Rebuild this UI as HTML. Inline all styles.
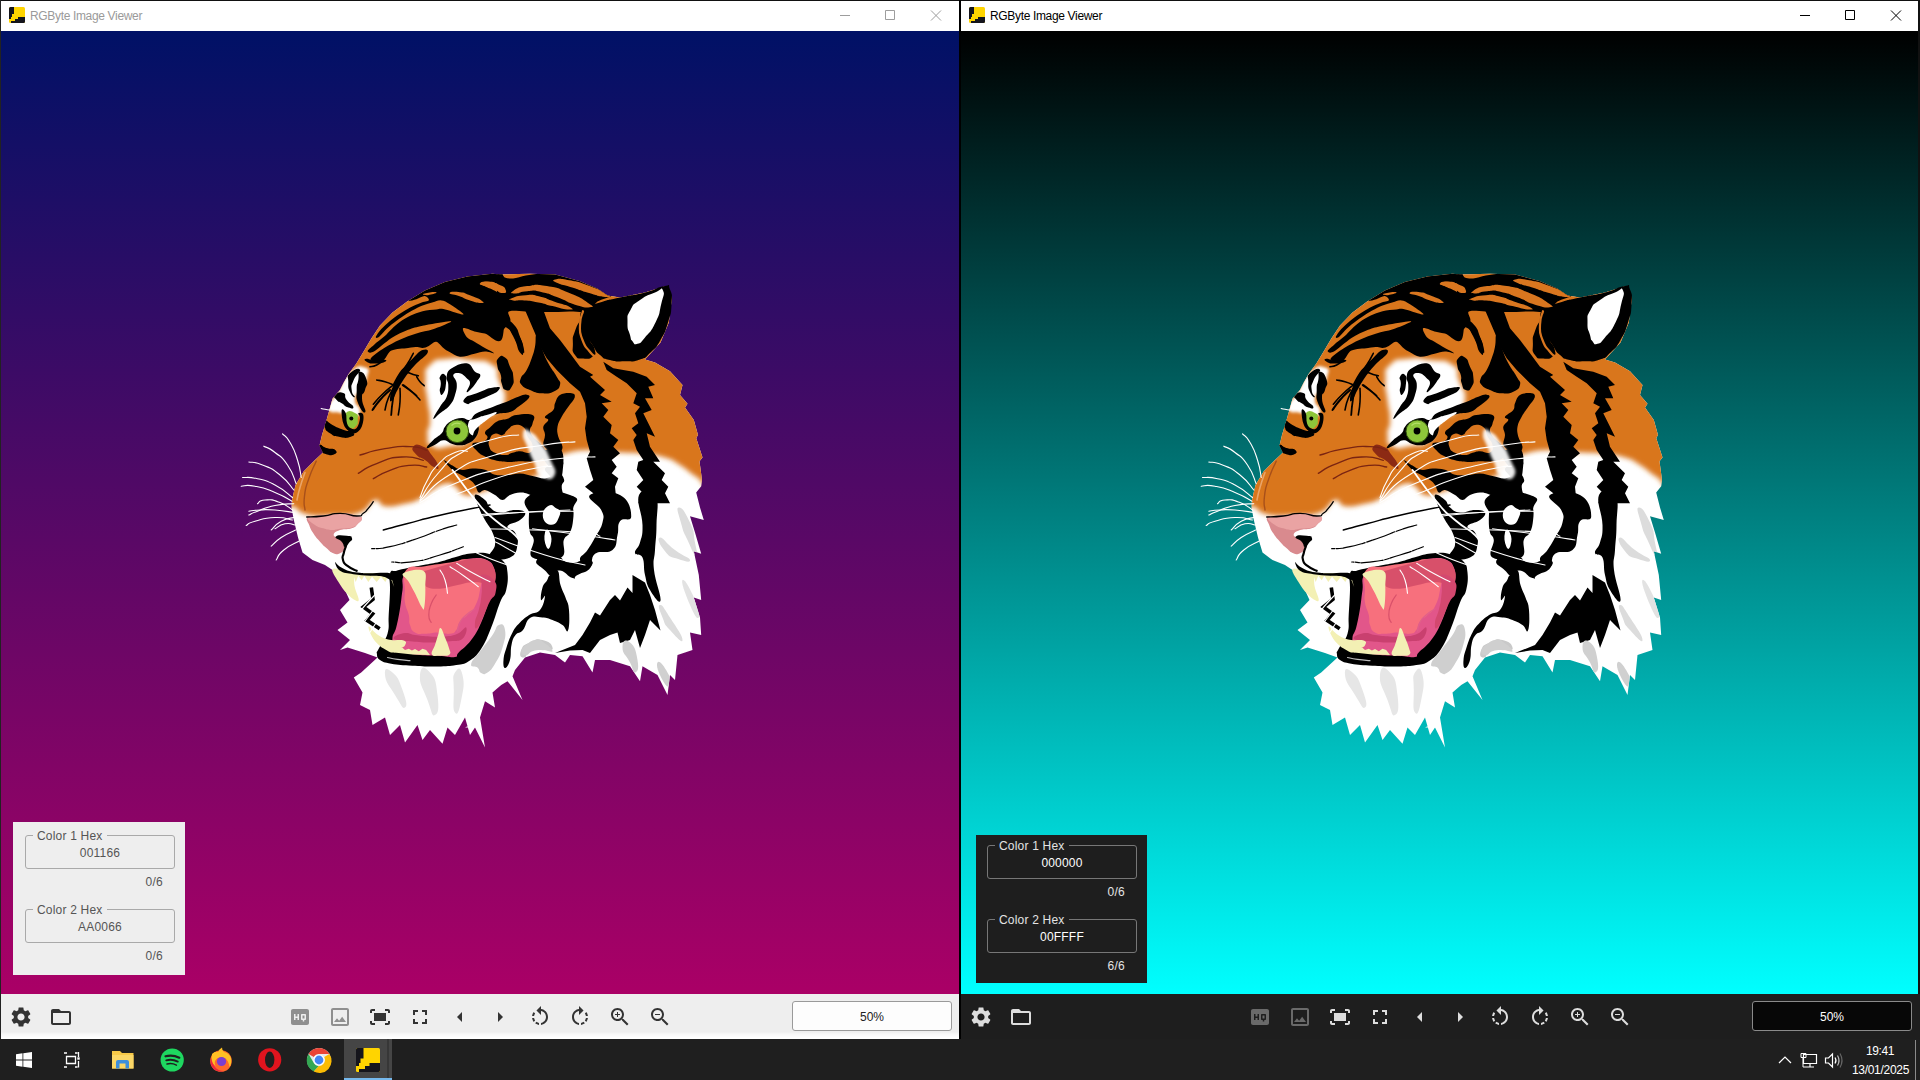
<!DOCTYPE html>
<html><head><meta charset="utf-8">
<style>
*{margin:0;padding:0;box-sizing:border-box}
html,body{width:1920px;height:1080px;overflow:hidden;background:#1f1f1f;font-family:"Liberation Sans",sans-serif}
.abs{position:absolute}
#lw{left:0;top:0;width:960px;height:1039px;background:#fff}
#rw{left:960px;top:0;width:960px;height:1039px;background:#1e1e1e}
.tb{left:0;top:0;width:100%;height:31px;background:#fff;border-top:1px solid #111}
.tb .ttl{position:absolute;left:30px;top:7px;font-size:12px;line-height:16px;letter-spacing:-0.340px}
.cv{left:0;top:31px;width:100%;height:963px}
#lw .cv{background:linear-gradient(#001166,#aa0066)}
#rw .cv{background:linear-gradient(#000000,#00ffff)}
.bar{left:0;top:994px;width:100%;height:45px}
#lw .bar{background:linear-gradient(#eeeeee 0,#eeeeee 38px,#f7f7f7 40px,#ffffff 44px)}
#rw .bar{background:#1e1e1e}
.ic{position:absolute;width:24px;height:24px;top:11px}
.zb{position:absolute;top:7px;width:160px;height:30px;border-radius:3px;font-size:12px;line-height:30px;text-align:center}
#lw .zb{left:792px;background:#fdfdfd;border:1px solid #9a9a9a;color:#222}
#rw .zb{left:792px;background:#070707;border:1px solid #8a8a8a;color:#fff}
.pn{position:absolute;font-size:12px}
.fs{position:absolute;left:12px;width:150px;height:34px;border:1px solid;border-radius:3px}
.fs .lg{position:absolute;left:7px;top:-8px;padding:0 4px;line-height:16px;letter-spacing:.2px}
.fs .vl{position:absolute;left:0;width:100%;top:9px;text-align:center;line-height:16px;letter-spacing:.2px}
.ct{position:absolute;right:22px;line-height:16px;letter-spacing:.3px}
#task{left:0;top:1039px;width:1920px;height:41px;background:#1f1f1f}
</style></head><body>
<svg width="0" height="0" style="position:absolute">
<defs>
<symbol id="i-gear" viewBox="0 0 24 24"><path d="M19.14,12.94c0.04-0.3,0.06-0.61,0.06-0.94c0-0.32-0.02-0.64-0.07-0.94l2.03-1.58c0.18-0.14,0.23-0.41,0.12-0.61 l-1.92-3.32c-0.12-0.22-0.37-0.29-0.59-0.22l-2.39,0.96c-0.5-0.38-1.03-0.7-1.62-0.94L14.4,2.81c-0.04-0.24-0.24-0.41-0.48-0.41 h-3.84c-0.24,0-0.43,0.17-0.47,0.41L9.25,5.35C8.66,5.59,8.12,5.92,7.63,6.29L5.24,5.33c-0.22-0.08-0.47,0-0.59,0.22L2.74,8.87 C2.62,9.08,2.66,9.34,2.86,9.48l2.03,1.58C4.84,11.36,4.8,11.69,4.8,12s0.02,0.64,0.07,0.94l-2.03,1.58 c-0.18,0.14-0.23,0.41-0.12,0.61l1.92,3.32c0.12,0.22,0.37,0.29,0.59,0.22l2.39-0.96c0.5,0.38,1.03,0.7,1.62,0.94l0.36,2.54 c0.05,0.24,0.24,0.41,0.48,0.41h3.84c0.24,0,0.44-0.17,0.47-0.41l0.36-2.54c0.59-0.24,1.13-0.56,1.62-0.94l2.39,0.96 c0.22,0.08,0.47,0,0.59-0.22l1.92-3.32c0.12-0.22,0.07-0.47-0.12-0.61L19.14,12.94z M12,15.6c-1.98,0-3.6-1.62-3.6-3.6 s1.62-3.6,3.6-3.6s3.6,1.62,3.6,3.6S13.980,15.6,12,15.6z"/></symbol>
<symbol id="i-folder" viewBox="0 0 24 24"><path d="M20 6h-8l-2-2H4c-1.1 0-1.990.9-1.990 2L2 18c0 1.1.9 2 2 2h16c1.1 0 2-.9 2-2V8c0-1.1-.9-2-2-2zm0 12H4V8h16v10z"/></symbol>
<symbol id="i-hq" viewBox="0 0 24 24"><path d="M19 4H5c-1.110 0-2 .9-2 2v12c0 1.1.890 2 2 2h14c1.1 0 2-.9 2-2V6c0-1.1-.9-2-2-2zm-8 11H9.500v-2h-2v2H6V9h1.500v2.500h2V9H11v6zm7-1c0 .550-.450 1-1 1h-.750v1.500h-1.500V15H14c-.550 0-1-.450-1-1v-4c0-.550.450-1 1-1h3c.550 0 1 .450 1 1v4zm-3.500-.5h2v-3h-2v3z"/></symbol>
<symbol id="i-img" viewBox="0 0 24 24"><path d="M19 5v14H5V5h14m0-2H5c-1.1 0-2 .9-2 2v14c0 1.1.9 2 2 2h14c1.1 0 2-.9 2-2V5c0-1.1-.9-2-2-2zm-4.860 8.860l-3 3.870L9 13.140 6 17h12l-3.860-5.140z"/></symbol>
<symbol id="i-fit" viewBox="0 0 24 24"><path d="M17 4h3c1.1 0 2 .9 2 2v2h-2V6h-3V4zM4 8V6h3V4H4c-1.1 0-2 .9-2 2v2h2zm16 8v2h-3v2h3c1.1 0 2-.9 2-2v-2h-2zM7 18H4v-2H2v2c0 1.1.9 2 2 2h3v-2zM18 8H6v8h12V8z"/></symbol>
<symbol id="i-full" viewBox="0 0 24 24"><path d="M7 14H5v5h5v-2H7v-3zm-2-4h2V7h3V5H5v5zm12 7h-3v2h5v-5h-2v3zM14 5v2h3v3h2V5h-5z"/></symbol>
<symbol id="i-al" viewBox="0 0 24 24"><path d="M14 7l-5 5 5 5V7z"/></symbol>
<symbol id="i-ar" viewBox="0 0 24 24"><path d="M10 17l5-5-5-5v10z"/></symbol>
<symbol id="i-rl" viewBox="0 0 24 24"><path d="M7.110 8.530L5.700 7.110C4.800 8.270 4.240 9.610 4.070 11h2.020c.14-.870.490-1.720 1.020-2.470zM6.090 13H4.070c.17 1.390.72 2.730 1.620 3.890l1.410-1.420c-.52-.75-.87-1.590-1.010-2.470zm1.010 5.320c1.160.9 2.510 1.440 3.900 1.610V17.900c-.87-.15-1.710-.49-2.460-1.030L7.100 18.320zM13 4.070V1L8.450 5.550 13 10V6.090c2.840.48 5 2.940 5 5.910s-2.160 5.430-5 5.910v2.020c3.950-.49 7-3.850 7-7.930s-3.050-7.440-7-7.930z"/></symbol>
<symbol id="i-rr" viewBox="0 0 24 24"><path d="M15.550 5.550L11 1v3.070C7.060 4.560 4 7.920 4 12s3.050 7.440 7 7.930v-2.020c-2.840-.48-5-2.940-5-5.910s2.160-5.430 5-5.910V10l4.550-4.450zM19.930 11c-.17-1.390-.72-2.730-1.620-3.890l-1.420 1.420c.54.75.88 1.600 1.020 2.470h2.020zM13 17.900v2.020c1.390-.17 2.740-.71 3.900-1.610l-1.440-1.440c-.75.540-1.590.890-2.460 1.030zm3.890-2.420l1.420 1.410c.9-1.160 1.450-2.500 1.620-3.890h-2.020c-.14.870-.48 1.720-1.020 2.480z"/></symbol>
<symbol id="i-zi" viewBox="0 0 24 24"><path d="M15.500 14h-.79l-.28-.27C15.410 12.590 16 11.110 16 9.500 16 5.910 13.090 3 9.500 3S3 5.910 3 9.500 5.910 16 9.500 16c1.610 0 3.090-.59 4.230-1.570l.27.28v.79l5 4.990L20.490 19l-4.990-5zm-6 0C7.010 14 5 11.990 5 9.500S7.010 5 9.500 5 14 7.010 14 9.500 11.990 14 9.500 14zM12 10h-2v2H9v-2H7V9h2V7h1v2h2v1z"/></symbol>
<symbol id="i-zo" viewBox="0 0 24 24"><path d="M15.500 14h-.79l-.28-.27C15.410 12.590 16 11.110 16 9.500 16 5.910 13.090 3 9.500 3S3 5.910 3 9.500 5.910 16 9.500 16c1.610 0 3.090-.59 4.230-1.570l.27.28v.79l5 4.990L20.490 19l-4.990-5zm-6 0C7.010 14 5 11.990 5 9.500S7.010 5 9.500 5 14 7.010 14 9.500 11.990 14 9.500 14zM7 9h5v1H7z"/></symbol>
<symbol id="i-app" viewBox="0 0 16 16"><rect x="0" y="0" width="16" height="16" rx="1.5" fill="#ffd400"/><path d="M0 1.500Q0 0 1.500 0H5V7H3V10H2V12H0Z" fill="#15151c"/><path d="M16 10H9V12H6V14H2V16H14.500Q16 16 16 14.500Z" fill="#15151c"/></symbol>
<!--TIGER--><g id="tiger">
<clipPath id="tsil"><path d="M292.0 500.0L295.5 485.0L303.8 471.2L315.0 460.0L323.0 452.5L319.5 445.5L322.0 435.0L326.2 421.2L329.5 409.5L332.5 398.8L340.0 390.0L343.8 382.5L348.8 373.8L356.2 363.8L363.8 351.2L371.2 338.8L380.0 325.5L392.5 312.5L407.5 301.2L425.0 290.5L445.0 282.0L467.5 276.5L492.5 273.8L500.0 274.5L530.0 273.8L555.0 274.5L580.0 281.2L597.5 288.8L607.5 295.5L620.0 297.5L645.0 292.5L665.0 286.2L672.0 297.5L668.8 322.5L660.5 342.5L645.0 359.5L655.0 362.5L670.0 371.2L682.5 385.0L680.0 395.0L687.5 403.8L685.0 407.5L693.8 420.0L698.0 435.0L696.2 438.0L702.5 457.5L699.5 461.2L702.0 480.0L701.2 486.2L696.2 492.5L700.0 507.5L703.8 520.0L690.0 516.2L695.0 532.5L701.2 553.8L693.8 551.2L698.8 575.0L701.2 600.0L693.8 597.5L700.0 617.5L701.2 635.0L690.0 632.5L692.5 650.0L677.5 655.0L675.0 680.0L670.0 675.0L667.5 695.0L657.5 675.0L642.5 666.2L640.0 681.2L630.0 666.2L610.0 660.0L595.0 660.0L592.5 672.5L582.5 656.2L570.0 655.0L565.0 662.5L555.0 655.0L540.0 652.5L525.0 657.5L515.0 670.0L512.5 676.2L522.5 700.0L507.5 681.2L501.2 685.0L492.5 692.5L495.0 707.5L485.0 701.2L480.0 717.5L485.0 747.5L475.0 727.5L465.0 727.5L480.0 720.0L470.0 735.0L465.0 717.5L455.0 735.0L447.5 727.5L442.5 743.8L430.0 730.0L422.5 740.0L417.5 725.0L405.0 742.5L400.0 725.0L390.0 735.0L385.0 717.5L372.5 725.0L370.0 710.0L360.0 705.0L362.5 692.5L353.8 677.5L361.2 672.5L377.5 657.5L365.0 653.0L347.5 647.5L340.0 650.0L350.0 640.0L337.5 630.0L347.5 622.5L340.0 610.0L349.5 600.0L343.8 587.5L337.5 575.0L332.5 570.0L325.0 565.0L312.5 560.0L302.5 552.5L298.0 537.5L293.8 520.0L291.5 507.5Z"/></clipPath>
<filter id="tb3" x="-20%" y="-20%" width="140%" height="140%"><feGaussianBlur stdDeviation="2.500"/></filter>
<filter id="tb1" x="-20%" y="-20%" width="140%" height="140%"><feGaussianBlur stdDeviation="1.600"/></filter>
<path d="M292.0 500.0L295.5 485.0L303.8 471.2L315.0 460.0L323.0 452.5L319.5 445.5L322.0 435.0L326.2 421.2L329.5 409.5L332.5 398.8L340.0 390.0L343.8 382.5L348.8 373.8L356.2 363.8L363.8 351.2L371.2 338.8L380.0 325.5L392.5 312.5L407.5 301.2L425.0 290.5L445.0 282.0L467.5 276.5L492.5 273.8L500.0 274.5L530.0 273.8L555.0 274.5L580.0 281.2L597.5 288.8L607.5 295.5L620.0 297.5L645.0 292.5L665.0 286.2L672.0 297.5L668.8 322.5L660.5 342.5L645.0 359.5L655.0 362.5L670.0 371.2L682.5 385.0L680.0 395.0L687.5 403.8L685.0 407.5L693.8 420.0L698.0 435.0L696.2 438.0L702.5 457.5L699.5 461.2L702.0 480.0L701.2 486.2L696.2 492.5L700.0 507.5L703.8 520.0L690.0 516.2L695.0 532.5L701.2 553.8L693.8 551.2L698.8 575.0L701.2 600.0L693.8 597.5L700.0 617.5L701.2 635.0L690.0 632.5L692.5 650.0L677.5 655.0L675.0 680.0L670.0 675.0L667.5 695.0L657.5 675.0L642.5 666.2L640.0 681.2L630.0 666.2L610.0 660.0L595.0 660.0L592.5 672.5L582.5 656.2L570.0 655.0L565.0 662.5L555.0 655.0L540.0 652.5L525.0 657.5L515.0 670.0L512.5 676.2L522.5 700.0L507.5 681.2L501.2 685.0L492.5 692.5L495.0 707.5L485.0 701.2L480.0 717.5L485.0 747.5L475.0 727.5L465.0 727.5L480.0 720.0L470.0 735.0L465.0 717.5L455.0 735.0L447.5 727.5L442.5 743.8L430.0 730.0L422.5 740.0L417.5 725.0L405.0 742.5L400.0 725.0L390.0 735.0L385.0 717.5L372.5 725.0L370.0 710.0L360.0 705.0L362.5 692.5L353.8 677.5L361.2 672.5L377.5 657.5L365.0 653.0L347.5 647.5L340.0 650.0L350.0 640.0L337.5 630.0L347.5 622.5L340.0 610.0L349.5 600.0L343.8 587.5L337.5 575.0L332.5 570.0L325.0 565.0L312.5 560.0L302.5 552.5L298.0 537.5L293.8 520.0L291.5 507.5Z" fill="#fff"/>
<g clip-path="url(#tsil)">
<path d="M280.0 510.0C283.2 522.3 284.7 505.1 292.0 506.2C299.3 507.4 296.0 512.2 307.5 514.5C319.0 516.8 321.0 515.5 335.0 515.0C349.0 514.5 349.3 516.5 360.0 512.5C370.7 508.5 368.3 501.7 375.0 500.0C381.7 498.3 377.0 505.2 385.0 506.2C393.0 507.2 395.7 505.8 405.0 503.8C414.3 501.8 412.7 502.4 420.0 498.8C427.3 495.1 425.8 494.0 432.5 490.0C439.2 486.0 439.0 484.8 445.0 483.8C451.0 482.8 449.7 483.2 455.0 486.2C460.3 489.2 458.3 493.3 465.0 495.0C471.7 496.7 470.7 495.2 480.0 492.5C489.3 489.8 490.0 488.3 500.0 485.0C510.0 481.7 508.8 482.0 517.5 480.0C526.2 478.0 523.2 482.8 532.5 477.5C541.8 472.2 543.8 466.3 552.5 460.0C561.2 453.7 555.0 456.4 565.0 453.8C575.0 451.1 575.3 450.3 590.0 450.0C604.7 449.7 606.0 451.5 620.0 452.5C634.0 453.5 630.5 452.4 642.5 453.8C654.5 455.1 655.0 454.5 665.0 457.5C675.0 460.5 671.3 459.7 680.0 465.0C688.7 470.3 686.8 470.8 697.5 477.5C708.2 484.2 711.3 521.3 720.0 490.0C728.7 458.7 747.3 421.3 730.0 360.0C712.7 298.7 735.0 286.7 655.0 260.0C575.0 233.3 523.3 240.0 430.0 260.0C336.7 280.0 345.0 281.7 305.0 335.0C265.0 388.3 286.7 413.3 280.0 460.0C273.3 506.7 276.8 497.7 280.0 510.0Z" fill="#d9761f" filter="url(#tb3)"/>
<path d="M430.0 365.0C437.3 357.9 434.2 360.4 447.5 358.8C460.8 357.1 455.0 357.9 470.0 360.0C485.0 362.1 482.9 358.3 492.5 365.0C502.1 371.7 494.6 368.3 498.8 380.0C502.9 391.7 506.2 389.2 505.0 400.0C503.8 410.8 503.3 405.8 495.0 412.5C486.7 419.2 488.3 410.8 480.0 420.0C471.7 429.2 480.0 431.2 470.0 440.0C460.0 448.8 462.5 444.2 450.0 446.2C437.5 448.3 440.0 450.0 432.5 446.2C425.0 442.5 428.3 443.8 427.5 435.0C426.7 426.2 430.0 431.7 430.0 420.0C430.0 408.3 429.0 413.3 427.5 400.0C426.0 386.7 424.7 391.7 425.5 380.0C426.3 368.3 422.7 372.1 430.0 365.0Z" fill="#fff" filter="url(#tb3)"/>
<path d="M328.8 405.0C331.2 398.8 330.4 403.3 337.5 392.5C344.6 381.7 340.8 380.8 350.0 372.5C359.2 364.2 359.3 365.8 365.0 367.5C370.7 369.2 368.7 370.0 367.0 377.5C365.3 385.0 364.0 382.5 360.0 390.0C356.0 397.5 355.0 393.3 355.0 400.0C355.0 406.7 360.0 404.6 360.0 410.0C360.0 415.4 361.7 415.2 355.0 416.2C348.3 417.2 348.3 414.7 340.0 413.0C331.7 411.3 333.8 413.9 330.0 411.2C326.2 408.6 326.2 411.2 328.8 405.0Z" fill="#fff" filter="url(#tb1)"/>
</g>
<path d="M580.0 317.5C580.8 309.2 580.8 312.5 587.5 307.5C594.2 302.5 589.2 305.8 600.0 302.5C610.8 299.2 605.0 300.8 620.0 297.5C635.0 294.2 630.4 296.2 645.0 292.5C659.6 288.8 655.4 287.2 663.8 286.2C672.1 285.2 667.4 283.2 670.0 289.5C672.6 295.8 672.2 294.0 671.5 305.0C670.8 316.0 671.7 310.8 668.0 322.5C664.3 334.2 666.3 330.0 660.5 340.0C654.7 350.0 657.3 346.0 650.5 352.5C643.7 359.0 648.5 356.6 640.0 359.5C631.5 362.4 635.0 361.1 625.0 361.2C615.0 361.4 618.3 362.1 610.0 360.0C601.7 357.9 605.8 360.0 600.0 355.0C594.2 350.0 597.5 352.5 592.5 345.0C587.5 337.5 589.2 341.7 585.0 332.5C580.8 323.3 579.2 325.8 580.0 317.5Z" fill="#000"/>
<path d="M630.0 335.0C628.3 328.8 627.3 330.8 627.5 322.5C627.7 314.2 626.3 317.5 630.5 310.0C634.7 302.5 631.8 305.8 640.0 300.0C648.2 294.2 647.3 295.7 655.0 292.5C662.7 289.3 661.0 286.3 663.0 290.5C665.0 294.7 663.5 294.3 661.0 305.0C658.5 315.7 660.8 311.7 655.5 322.5C650.2 333.3 651.0 330.4 645.0 337.5C639.0 344.6 641.7 342.5 637.5 343.8C633.3 345.0 635.0 344.2 632.5 341.2C630.0 338.3 631.7 341.2 630.0 335.0Z" fill="#fff"/>
<g clip-path="url(#tsil)">
<path d="M408.1 300.8C408.1 300.1 414.0 297.0 416.4 295.1C418.8 293.2 419.8 291.2 422.6 289.4C425.4 287.6 429.5 285.6 433.0 284.2C436.4 282.8 439.9 282.1 443.4 281.1C446.8 280.0 450.3 278.8 453.7 278.0C457.2 277.1 460.7 276.5 464.1 275.9C467.6 275.3 471.0 274.7 474.5 274.3C477.9 274.0 480.2 274.0 484.9 273.8C489.5 273.6 499.6 262.7 502.5 273.3C505.4 283.9 505.4 327.6 502.5 337.6C499.6 347.6 489.5 334.5 484.9 333.5C480.2 332.4 478.1 332.3 474.5 331.4C470.9 330.5 464.3 327.2 463.1 328.3C461.9 329.3 465.3 335.4 467.2 337.6C469.1 339.9 471.5 340.0 474.5 341.8C477.4 343.5 481.6 346.1 484.9 348.0C488.1 349.9 494.2 352.6 494.2 353.2C494.2 353.8 488.1 351.5 484.9 351.6C481.6 351.7 478.6 352.8 474.5 353.7C470.3 354.6 464.1 357.1 460.0 356.8C455.8 356.5 452.4 353.6 449.6 352.1C446.8 350.7 445.6 349.7 443.4 348.0C441.1 346.3 438.5 342.1 436.1 341.8C433.7 341.4 431.1 344.9 428.8 345.9C426.6 347.0 424.5 347.8 422.6 348.0C420.7 348.2 419.8 347.0 417.4 347.0C415.0 347.0 412.4 347.4 408.1 348.0C403.8 348.6 395.5 348.7 391.5 350.6C387.5 352.5 386.8 357.6 384.2 359.4C381.6 361.2 378.2 361.6 375.9 361.5C373.7 361.3 369.4 360.6 370.7 358.4C372.1 356.1 379.4 351.1 384.2 348.0C389.1 344.9 394.4 342.1 399.8 339.7C405.2 337.3 410.9 335.2 416.4 333.5C421.9 331.7 427.5 331.1 433.0 329.3C438.5 327.5 447.2 323.9 449.6 322.6C452.0 321.3 452.0 321.0 447.5 321.5C443.0 322.1 429.2 324.3 422.6 325.7C416.0 327.1 413.3 327.8 408.1 329.8C402.9 331.9 397.2 334.5 391.5 338.1C385.8 341.8 377.8 349.5 373.9 351.6C369.9 353.8 367.6 352.2 367.6 351.1C367.6 350.0 371.1 347.3 373.9 344.9C376.6 342.5 381.3 339.2 384.2 336.6C387.2 334.0 388.9 331.7 391.5 329.3C394.1 326.9 396.7 324.3 399.8 322.1C402.9 319.8 406.4 317.6 410.2 315.8C414.0 314.0 418.3 312.2 422.6 311.2C426.9 310.1 432.6 310.0 436.1 309.6C439.6 309.3 439.2 308.3 443.4 309.1C447.5 309.9 458.0 313.8 461.0 314.3C464.0 314.8 464.5 314.4 461.5 312.2C458.6 310.0 448.1 302.4 443.4 300.8C438.6 299.1 436.4 301.6 433.0 302.3C429.5 303.1 426.1 304.1 422.6 305.5C419.2 306.8 415.7 308.7 412.2 310.6C408.8 312.5 405.3 314.5 401.9 316.9C398.4 319.2 394.6 322.1 391.5 324.6C388.4 327.2 385.4 330.3 383.2 332.4C380.9 334.6 379.2 336.9 378.0 337.6C376.8 338.3 375.4 338.0 375.9 336.6C376.5 335.2 378.9 331.8 381.1 329.3C383.4 326.8 386.3 324.1 389.4 321.5C392.5 318.9 396.3 316.1 399.8 313.8C403.3 311.4 406.7 309.3 410.2 307.5C413.6 305.7 417.4 304.1 420.5 302.9C423.7 301.7 428.1 301.4 428.8 300.3C429.5 299.1 426.8 296.3 424.7 296.1C422.6 295.9 419.2 298.5 416.4 299.2C413.6 300.0 408.1 301.5 408.1 300.8Z" fill="#000"/>
<path d="M424.7 293.5C428.1 292.6 434.0 291.8 436.1 292.2C438.2 292.5 434.4 293.6 430.9 294.6C427.5 295.5 427.8 295.4 425.7 295.1C423.7 294.7 421.2 294.5 424.7 293.5Z" fill="#d9761f"/>
<path d="M449.6 293.0C449.9 291.7 453.4 291.5 460.0 292.2C466.5 292.9 462.0 292.2 469.3 295.1C476.6 298.0 478.3 298.2 481.7 300.8C485.2 303.4 483.8 303.0 479.7 302.9C475.5 302.7 476.2 302.5 469.3 300.3C462.4 298.0 465.5 298.5 458.9 296.1C452.4 293.7 449.2 294.3 449.6 293.0Z" fill="#d9761f"/>
<path d="M480.7 283.7C482.1 282.3 482.1 281.4 489.0 282.1C495.9 282.8 495.9 283.2 501.5 285.7C507.0 288.3 505.6 287.3 505.6 289.9C505.6 292.5 505.6 293.5 501.5 293.5C497.3 293.5 498.7 292.3 493.2 289.9C487.6 287.5 489.0 288.3 484.9 286.3C480.7 284.2 479.3 285.1 480.7 283.7Z" fill="#d9761f"/>
<path d="M497.7 272.7C498.8 262.7 502.1 276.4 504.7 277.4C507.3 278.3 509.6 278.7 513.1 278.4C516.6 278.1 521.3 276.4 525.8 275.5C530.2 274.7 535.2 273.8 539.8 273.4C544.5 273.1 549.0 273.0 553.9 273.4C558.8 273.9 564.0 275.0 569.4 276.2C574.8 277.5 581.1 279.3 586.2 281.2C591.4 283.0 596.1 285.2 600.3 287.5C604.5 289.8 612.0 292.9 611.6 295.2C611.1 297.6 601.5 298.9 597.5 301.6C593.5 304.3 592.3 309.8 587.7 311.4C583.0 313.0 576.2 311.3 569.4 311.4C562.6 311.5 554.1 312.1 546.9 312.1C539.6 312.1 532.1 311.5 525.8 311.4C519.5 311.3 511.5 309.8 508.9 311.4C506.3 313.0 511.5 318.0 510.3 321.2C509.1 324.5 504.0 328.4 501.9 331.1C499.8 333.8 498.4 347.3 497.7 337.6C497.0 327.8 496.5 282.8 497.7 272.7Z" fill="#000"/>
<path d="M480.1 283.3C481.2 281.8 482.2 281.1 488.5 281.6C494.8 282.1 493.4 282.2 499.1 284.7C504.7 287.2 504.2 286.4 505.4 289.2C506.6 292.0 506.6 293.2 502.6 293.1C498.6 293.0 499.3 291.2 493.4 288.9C487.6 286.6 489.5 288.0 485.0 286.1C480.5 284.2 478.9 284.8 480.1 283.3Z" fill="#d9761f"/>
<path d="M555.3 279.5C559.1 278.5 558.1 278.1 569.4 280.2C580.6 282.3 576.2 280.9 589.1 285.8C602.0 290.7 603.4 291.2 608.0 294.8C612.7 298.5 609.5 297.3 603.1 296.8C596.8 296.2 599.4 296.2 589.1 293.1C578.8 290.0 582.5 290.8 572.2 287.5C561.9 284.2 563.8 286.0 558.1 283.3C552.5 280.6 551.6 280.5 555.3 279.5Z" fill="#d9761f"/>
<path d="M513.1 291.0C516.9 288.6 515.9 287.7 527.2 286.1C538.4 284.5 532.8 283.8 546.9 286.1C560.9 288.4 555.8 287.6 569.4 293.1C583.0 298.7 580.9 298.0 587.7 302.7C594.5 307.4 594.0 306.5 589.8 307.2C585.5 307.8 585.5 307.8 575.0 304.7C564.5 301.5 569.4 301.8 558.1 297.6C546.9 293.4 551.6 294.2 541.2 292.0C530.9 289.8 535.6 290.7 527.2 291.2C518.8 291.6 520.6 293.5 515.9 293.4C511.2 293.4 509.4 293.5 513.1 291.0Z" fill="#d9761f"/>
<path d="M511.7 298.2C515.9 296.5 516.4 295.8 525.8 295.2C535.2 294.7 530.5 294.5 539.8 296.6C549.2 298.8 543.8 298.0 553.9 301.6C564.0 305.1 565.6 304.6 570.1 307.2C574.5 309.8 573.1 309.8 567.3 309.4C561.4 309.1 562.1 308.4 552.5 306.1C542.9 303.7 547.8 304.3 538.4 302.4C529.1 300.5 532.8 301.1 524.4 300.4C515.9 299.8 517.3 301.2 513.1 300.4C508.9 299.7 507.5 299.9 511.7 298.2Z" fill="#d9761f"/>
<path d="M506.1 321.2C508.4 321.2 507.5 320.8 511.7 325.5C515.9 330.2 514.8 327.8 518.8 335.3C522.7 342.8 522.5 342.3 523.7 348.0C524.8 353.6 524.4 353.6 522.3 352.2C520.2 350.8 520.9 350.3 517.3 343.8C513.8 337.2 515.9 338.6 511.7 332.5C507.5 326.4 506.6 329.2 504.7 325.5C502.8 321.7 503.8 321.2 506.1 321.2Z" fill="#000"/>
<path d="M575.0 331.1C578.0 322.7 577.3 325.0 582.0 318.4C586.7 311.9 587.2 309.5 589.1 311.4C590.9 313.3 587.7 315.2 587.7 324.1C587.7 333.0 586.7 329.7 589.1 338.1C591.4 346.6 593.5 343.3 594.7 349.4C595.9 355.5 596.3 353.4 592.6 356.4C588.8 359.5 589.3 359.0 583.4 358.5C577.6 358.0 578.5 359.9 575.0 355.0C571.5 350.1 572.9 351.7 572.9 343.8C572.9 335.8 572.0 339.5 575.0 331.1Z" fill="#000"/>
<path d="M525.0 310.0L535.0 333.3L540.0 346.7L546.7 358.3L556.7 370.0L570.0 383.3L580.0 391.7L585.0 403.3L586.7 416.7L585.0 428.3L586.7 440.0L590.0 451.7L586.7 458.3L590.0 470.0L593.3 480.0L585.0 486.7L593.3 493.3L596.7 503.3L616.7 503.3L615.0 486.7L618.3 478.3L611.7 473.3L616.7 466.7L611.7 460.0L620.0 453.3L613.3 446.7L618.3 440.0L610.0 433.3L611.7 425.0L603.3 416.7L608.3 410.0L601.7 403.3L611.7 401.7L600.0 395.0L605.0 390.0L590.0 376.7L593.3 375.0L580.0 366.7L570.0 353.3L560.0 340.0L550.0 328.3L543.3 310.0Z" fill="#000"/>
<path d="M507.5 321.7C508.9 320.0 510.0 320.0 514.2 325.0C518.3 330.0 516.9 328.1 520.0 336.7C523.1 345.3 523.3 345.6 523.3 350.8C523.3 356.1 522.8 356.1 520.0 352.5C517.2 348.9 518.3 347.5 515.0 340.0C511.7 332.5 512.5 336.1 510.0 330.0C507.5 323.9 506.1 323.3 507.5 321.7Z" fill="#000"/>
<path d="M536.7 335.0C538.4 335.4 538.6 340.8 541.7 348.3C544.8 355.9 544.3 355.8 548.3 363.3C552.3 370.9 553.6 370.9 556.7 376.7C559.8 382.4 560.9 381.0 560.0 385.0C559.1 389.0 558.2 389.4 553.3 391.7C548.4 393.9 547.9 393.8 541.7 393.3C535.4 392.9 535.3 392.2 530.0 390.0C524.7 387.8 524.1 388.1 521.7 385.0C519.2 381.9 519.5 382.3 520.8 378.3C522.2 374.3 523.8 375.3 526.7 370.0C529.6 364.7 529.4 364.6 531.7 358.3C533.9 352.1 533.7 352.9 535.0 346.7C536.3 340.4 534.9 334.6 536.7 335.0Z" fill="#000"/>
<path d="M498.3 358.3C500.8 355.3 501.1 354.7 505.0 357.5C508.9 360.3 507.2 360.3 510.0 366.7C512.8 373.1 512.8 370.0 513.3 376.7C513.9 383.3 514.2 382.2 511.7 386.7C509.2 391.1 509.2 391.1 505.8 390.0C502.5 388.9 503.3 388.3 501.7 383.3C500.0 378.3 502.2 380.6 500.8 375.0C499.4 369.4 498.3 372.2 497.5 366.7C496.7 361.1 495.8 361.4 498.3 358.3Z" fill="#000"/>
<path d="M560.0 395.0C563.3 393.0 568.7 392.8 571.7 393.3C574.6 393.8 575.3 394.8 574.7 397.5C574.0 400.2 570.9 402.8 568.3 406.7C565.7 410.5 563.8 412.7 561.7 416.7C559.5 420.7 558.2 422.7 557.5 426.7C556.8 430.7 557.3 432.7 558.3 436.7C559.3 440.7 562.2 443.0 562.5 446.7C562.8 450.3 559.8 451.7 560.0 455.0C560.2 458.3 563.3 460.3 563.3 463.3C563.3 466.3 559.8 466.7 560.0 470.0C560.2 473.3 563.8 476.7 564.2 480.0C564.5 483.3 561.8 482.0 561.7 486.7C561.5 491.3 566.0 500.0 563.3 503.3C560.7 506.7 550.7 506.7 548.3 503.3C546.0 500.0 550.7 491.3 551.7 486.7C552.7 482.0 554.7 483.3 553.3 480.0C552.0 476.7 546.0 473.0 545.0 470.0C544.0 467.0 548.7 467.3 548.3 465.0C548.0 462.7 543.3 461.0 543.3 458.3C543.3 455.7 548.3 454.3 548.3 451.7C548.3 449.0 544.0 448.3 543.3 445.0C542.7 441.7 545.0 438.7 545.0 435.0C545.0 431.3 542.7 429.7 543.3 426.7C544.0 423.7 548.0 422.0 548.3 420.0C548.7 418.0 544.0 418.7 545.0 416.7C546.0 414.7 551.3 412.7 553.3 410.0C555.3 407.3 553.7 406.3 555.0 403.3C556.3 400.3 556.7 397.0 560.0 395.0Z" fill="#000"/>
<path d="M603.3 361.7L613.3 368.3L623.3 370.0L633.3 371.7L646.7 376.7L655.0 385.0L648.3 386.7L653.3 398.3L645.0 398.3L651.7 410.0L643.3 413.3L648.3 423.3L655.0 436.7L646.7 433.3L650.0 446.7L660.0 461.7L653.3 461.7L665.0 473.3L661.7 480.0L668.3 486.7L665.0 493.3L670.0 503.3L638.3 503.3L641.7 491.7L636.7 486.7L643.3 480.0L636.7 470.0L638.3 461.7L643.3 460.0L636.7 450.0L633.3 440.0L636.7 435.0L631.7 428.3L638.3 423.3L635.0 413.3L640.0 406.7L633.3 403.3L636.7 393.3L626.7 383.3L616.7 376.7L606.7 370.0Z" fill="#000"/>
</g>
<g clip-path="url(#tsil)">
<path d="M530.0 495.0C542.7 486.7 555.7 490.0 570.0 495.0C584.3 500.0 573.0 500.8 573.0 510.0C573.0 519.2 573.3 515.0 570.0 522.5C566.7 530.0 566.3 525.0 563.0 532.5C559.7 540.0 562.7 538.2 560.0 545.0C557.3 551.8 560.0 551.2 555.0 553.0C550.0 554.8 550.0 554.0 545.0 550.5C540.0 547.0 543.3 548.5 540.0 542.5C536.7 536.5 537.7 540.0 535.0 532.5C532.3 525.0 533.7 532.5 532.0 520.0C530.3 507.5 517.3 503.3 530.0 495.0Z" fill="#000"/>
<path d="M550.0 506.2C551.7 506.5 553.5 508.8 555.0 510.0C556.5 511.2 558.5 512.3 558.8 513.8C559.0 515.2 557.3 517.2 556.2 518.8C555.2 520.3 554.2 522.4 552.5 523.0C550.8 523.6 547.9 523.4 546.2 522.5C544.6 521.6 543.2 519.2 542.5 517.5C541.8 515.8 541.6 513.5 542.0 512.0C542.4 510.5 543.7 509.7 545.0 508.8C546.3 507.8 548.3 506.0 550.0 506.2Z" fill="#fff"/>
<path d="M537.0 559.5C540.3 554.7 544.0 555.0 555.0 556.0C566.0 557.0 559.2 561.3 570.0 562.5C580.8 563.7 580.7 557.8 587.5 559.5C594.3 561.2 593.8 562.3 590.5 567.5C587.2 572.7 583.5 571.5 577.5 575.0C571.5 578.5 578.3 579.5 572.5 578.0C566.7 576.5 566.7 571.5 560.0 570.5C553.3 569.5 557.5 575.0 552.5 575.0C547.5 575.0 550.2 575.7 545.0 570.5C539.8 565.3 533.7 564.3 537.0 559.5Z" fill="#000"/>
<path d="M550.0 575.0C552.5 572.7 555.0 568.2 557.5 570.5C560.0 572.8 558.6 578.7 560.5 585.0C562.4 591.3 563.5 591.7 565.5 597.5C567.5 603.3 568.4 602.3 569.0 610.0C569.6 617.7 569.5 627.0 568.0 630.5C566.5 634.0 566.1 627.5 562.5 625.0C558.9 622.5 557.2 621.8 552.5 620.0C547.8 618.2 547.8 618.0 542.5 617.5C537.2 617.0 534.5 615.1 530.0 618.0C525.5 620.9 526.4 626.0 523.0 630.0C519.6 634.0 518.2 631.5 515.5 635.0C512.8 638.5 512.8 639.2 511.5 645.0C510.2 650.8 511.5 654.6 510.0 660.0C508.5 665.4 506.5 668.0 505.0 668.0C503.5 668.0 503.1 664.8 503.5 660.0C503.9 655.2 504.4 653.9 506.5 647.5C508.6 641.1 509.4 638.3 512.5 632.5C515.6 626.7 515.9 626.7 520.0 622.5C524.1 618.3 525.3 617.4 530.0 614.5C534.7 611.6 536.5 614.3 540.0 610.0C543.5 605.7 544.8 598.6 545.0 596.2C545.2 593.9 541.6 602.0 541.0 600.0C540.4 598.0 541.1 592.0 542.5 587.5C543.9 583.0 545.2 583.4 547.0 580.5C548.8 577.6 547.5 577.3 550.0 575.0Z" fill="#000"/>
<path d="M590.0 495.0C594.4 491.5 610.4 490.0 620.0 495.0C629.6 500.0 631.2 510.1 631.2 516.2C631.2 522.4 623.2 516.9 620.0 521.2C616.8 525.6 619.2 528.3 617.5 535.0C615.8 541.7 617.8 545.6 612.5 550.0C607.2 554.4 600.2 549.7 595.0 553.8C589.8 557.8 593.5 566.0 590.0 567.5C586.5 569.0 580.6 564.1 580.0 560.0C579.4 555.9 584.0 555.2 587.5 550.0C591.0 544.8 591.5 543.9 595.0 537.5C598.5 531.1 601.0 528.9 602.5 522.5C604.0 516.1 604.2 516.4 601.2 510.0C598.3 503.6 585.6 498.5 590.0 495.0Z" fill="#000"/>
<path d="M639.0 495.0C642.0 488.0 651.4 488.0 655.5 495.0C659.6 502.0 656.6 512.2 656.5 525.0C656.4 537.8 655.6 539.5 655.0 550.0C654.4 560.5 652.7 558.2 654.0 570.0C655.3 581.8 661.4 595.8 660.5 600.5C659.6 605.2 653.6 596.0 650.0 590.0C646.4 584.0 646.8 582.6 645.0 575.0C643.2 567.4 644.8 562.6 642.5 557.5C640.2 552.4 635.6 556.5 635.0 553.0C634.4 549.5 638.2 549.0 640.0 542.5C641.8 536.0 642.7 536.1 642.5 525.0C642.3 513.9 636.0 502.0 639.0 495.0Z" fill="#000"/>
<path d="M632.5 575.0L645.0 582.5L650.0 595.0L655.0 610.0L660.5 630.5L650.0 620.0L645.0 635.0L640.0 648.0L635.0 630.0L630.0 640.0L620.0 643.0L617.5 632.5L610.0 635.0L600.0 640.0L590.0 653.0L582.5 650.0L570.0 650.5L555.0 653.0L575.0 645.0L582.5 635.0L590.0 622.5L595.0 612.5L600.0 615.5L610.0 600.0L615.0 595.0L620.0 600.5L627.5 587.5L632.5 593.0Z" fill="#000"/>
<path d="M521.2 650.0C523.3 645.0 522.9 645.8 530.0 642.5C537.1 639.2 535.0 638.3 542.5 640.0C550.0 641.7 551.7 644.2 552.5 647.5C553.3 650.8 551.7 649.2 545.0 650.0C538.3 650.8 539.6 647.5 532.5 650.0C525.4 652.5 527.5 657.5 523.8 657.5C520.0 657.5 519.2 655.0 521.2 650.0Z" fill="#c9c9c9"/>
<path d="M622.5 647.5C622.5 640.8 625.0 638.3 630.0 642.5C635.0 646.7 635.8 650.0 637.5 660.0C639.2 670.0 637.5 671.7 635.0 672.5C632.5 673.3 634.2 670.8 630.0 662.5C625.8 654.2 622.5 654.2 622.5 647.5Z" fill="#d0d0d0"/>
<path d="M657.5 662.5C659.2 660.0 663.3 665.0 667.5 672.5C671.7 680.0 671.7 682.5 670.0 685.0C668.3 687.5 666.7 687.5 662.5 680.0C658.3 672.5 655.8 665.0 657.5 662.5Z" fill="#d0d0d0"/>
</g>
<g clip-path="url(#tsil)">
<path d="M498.8 625.0C502.1 623.7 504.0 624.0 505.0 630.0C506.0 636.0 505.2 638.5 502.5 647.5C499.8 656.5 499.0 657.1 495.0 663.8C491.0 670.4 491.2 670.0 487.5 672.5C483.8 675.0 483.9 674.5 481.2 673.1C478.6 671.8 480.2 670.0 477.5 667.5C474.8 665.0 470.2 668.4 471.2 663.8C472.2 659.1 475.6 657.7 481.2 650.0C486.9 642.3 487.8 641.7 492.5 635.0C497.2 628.3 495.4 626.3 498.8 625.0Z" fill="#cfcfcf"/>
<path d="M521.2 651.2C521.6 648.2 523.5 646.8 527.5 643.8C531.5 640.8 531.9 640.3 536.2 640.0C540.6 639.7 539.4 639.5 543.8 642.5C548.1 645.5 552.8 649.2 552.5 651.2C552.2 653.2 547.8 650.0 542.5 650.0C537.2 650.0 536.8 649.9 532.5 651.2C528.2 652.6 529.2 655.0 526.2 655.0C523.2 655.0 520.9 654.2 521.2 651.2Z" fill="#cfcfcf"/>
<path d="M420.0 675.0C420.8 665.8 424.2 665.8 430.0 672.5C435.8 679.2 435.8 680.8 437.5 695.0C439.2 709.2 438.3 713.3 435.0 715.0C431.7 716.7 432.5 713.3 427.5 700.0C422.5 686.7 419.2 684.2 420.0 675.0Z" fill="#e6e6e6"/>
<path d="M455.0 672.5C457.9 667.5 460.4 665.8 462.5 675.0C464.6 684.2 463.8 687.5 461.2 700.0C458.8 712.5 457.5 715.8 455.0 712.5C452.5 709.2 453.8 703.3 453.8 690.0C453.8 676.7 452.1 677.5 455.0 672.5Z" fill="#e6e6e6"/>
<path d="M385.0 675.0C384.2 667.5 386.7 667.5 392.5 672.5C398.3 677.5 398.3 678.3 402.5 690.0C406.7 701.7 407.5 705.8 405.0 707.5C402.5 709.2 401.7 705.8 395.0 695.0C388.3 684.2 385.8 682.5 385.0 675.0Z" fill="#e6e6e6"/>
</g>
<path d="M390.0 573.3C391.6 568.8 392.8 572.0 396.7 570.8C400.6 569.6 400.5 569.7 406.7 568.3C412.9 566.9 415.5 566.5 423.3 565.0C431.1 563.5 432.2 563.6 440.0 561.7C447.8 559.8 448.9 558.7 456.7 556.7C464.5 554.7 465.5 553.9 473.3 553.3C481.1 552.7 483.1 552.4 490.0 554.2C496.9 556.0 498.9 556.7 503.0 561.0C507.1 565.3 506.8 565.7 507.5 572.5C508.2 579.3 507.9 583.0 506.2 590.0C504.4 597.0 503.5 593.8 500.0 602.5C496.5 611.2 495.6 616.7 491.2 627.5C486.8 638.3 486.4 640.8 481.2 648.7C475.9 656.6 474.5 657.4 468.7 661.2C462.9 665.0 463.5 663.8 456.2 665.0C448.9 666.2 447.7 666.3 437.5 666.5C427.3 666.7 423.3 666.5 412.5 665.8C401.7 665.1 398.8 665.1 391.2 663.7C383.6 662.3 383.3 662.3 380.0 660.0C376.7 657.7 377.2 656.3 376.9 653.7C376.6 651.1 376.2 653.4 378.7 648.7C381.2 644.0 385.2 641.6 387.5 633.7C389.8 625.8 388.1 625.2 388.7 615.0C389.3 604.8 389.7 599.7 390.0 590.0C390.3 580.3 388.4 577.8 390.0 573.3Z" fill="#000"/>
<path d="M405.0 575.0C409.9 570.5 415.1 572.7 423.3 570.8C431.5 568.9 432.2 568.8 440.0 566.7C447.8 564.6 448.9 563.7 456.7 561.7C464.5 559.7 466.3 558.7 473.3 558.3C480.3 557.9 481.9 557.7 486.7 560.0C491.5 562.3 492.1 562.8 494.0 568.0C495.9 573.2 495.9 575.6 495.0 582.5C494.1 589.4 493.2 588.2 490.0 597.5C486.8 606.8 485.6 612.6 481.2 622.5C476.8 632.4 476.4 633.0 471.2 640.0C465.9 647.0 462.5 648.5 458.7 652.5C454.9 656.5 459.4 656.2 455.0 657.0C450.6 657.8 448.2 656.5 440.0 656.0C431.8 655.5 428.2 655.9 420.0 655.0C411.8 654.1 410.8 654.3 405.0 652.0C399.2 649.7 397.9 648.4 395.0 645.0C392.1 641.6 392.2 641.6 392.5 637.5C392.8 633.4 394.4 634.2 396.2 627.5C397.9 620.8 398.5 617.5 400.0 608.7C401.5 600.0 401.3 597.9 402.5 590.0C403.7 582.1 400.1 579.5 405.0 575.0Z" fill="#e2568a"/>
<path d="M393.8 637.5C394.9 635.8 400.0 633.7 405.0 633.1C410.0 632.5 409.2 634.2 415.0 635.0C420.8 635.8 423.0 636.1 430.0 636.5C437.0 636.9 438.6 637.1 445.0 636.5C451.4 635.9 452.5 635.9 457.5 633.8C462.5 631.6 465.1 626.3 466.2 627.5C467.4 628.7 466.3 635.5 462.5 638.8C458.7 642.0 457.6 640.4 450.0 641.2C442.4 642.1 439.3 642.5 430.0 642.5C420.7 642.5 417.0 641.7 410.0 641.2C403.0 640.8 403.8 641.5 400.0 640.6C396.2 639.8 392.6 639.2 393.8 637.5Z" fill="#c9406f"/>
<path d="M406.2 570.0C400.9 576.3 405.3 581.3 405.0 590.0C404.7 598.7 404.0 595.8 405.0 602.5C406.0 609.2 407.4 609.0 408.8 615.0C410.1 621.0 408.3 620.3 410.0 625.0C411.7 629.7 411.0 630.2 415.0 632.5C419.0 634.8 419.0 633.8 425.0 633.8C431.0 633.8 430.8 632.5 437.5 632.5C444.2 632.5 445.0 634.4 450.0 633.8C455.0 633.1 453.6 633.3 456.2 630.0C458.9 626.7 457.0 625.2 460.0 621.2C463.0 617.2 463.5 619.0 467.5 615.0C471.5 611.0 471.7 612.9 475.0 606.2C478.3 599.6 478.3 599.3 480.0 590.0C481.7 580.7 484.2 579.2 481.2 571.2C478.2 563.2 477.1 562.3 468.8 560.0C460.4 557.7 461.7 560.8 450.0 562.5C438.3 564.2 436.7 564.2 425.0 566.2C413.3 568.2 411.6 563.7 406.2 570.0Z" fill="#f7707d"/>
<path d="M405.0 575.3C408.3 573.8 413.0 573.8 423.3 571.2C433.7 568.5 446.7 564.5 456.7 562.0C466.7 559.5 467.3 559.0 473.3 558.7C479.3 558.3 482.5 558.3 486.7 560.3C490.8 562.3 492.4 564.7 494.2 568.7C495.9 572.6 496.2 577.0 495.3 580.0C494.5 583.0 494.4 583.3 490.0 583.7C485.6 584.1 480.0 581.7 473.3 582.0C466.7 582.3 463.3 584.0 456.7 585.3C450.0 586.7 446.0 588.3 440.0 588.7C434.0 589.0 430.0 588.7 426.7 587.0C423.3 585.3 427.3 582.0 423.3 580.3C419.3 578.7 410.3 579.7 406.7 578.7C403.0 577.7 401.7 576.8 405.0 575.3Z" fill="#d8506a"/>
<path d="M481.2 575.0C484.4 573.7 489.9 575.3 493.8 580.0C497.6 584.7 496.6 586.8 495.6 592.5C494.6 598.2 492.8 595.9 490.0 601.2C487.2 606.6 488.3 605.5 485.0 612.5C481.7 619.5 480.2 624.8 477.5 627.5C474.8 630.2 474.7 627.2 475.0 622.5C475.3 617.8 477.1 616.7 478.8 610.0C480.4 603.3 480.4 604.2 481.2 597.5C482.1 590.8 481.9 591.0 481.9 585.0C481.9 579.0 478.1 576.3 481.2 575.0Z" fill="#d3486f"/>
<path d="M436.2 595.0C434.6 597.9 433.8 597.1 431.2 603.8C428.8 610.4 428.8 608.8 428.8 615.0C428.8 621.2 430.4 620.0 431.2 622.5" fill="none" stroke="#d9506a" stroke-width="1.2" stroke-linecap="round"/>
<path d="M475.0 608.8C472.1 610.8 471.2 610.4 466.2 615.0C461.2 619.6 462.9 617.1 460.0 622.5C457.1 627.9 458.3 628.3 457.5 631.2" fill="none" stroke="#e0608a" stroke-width="1.2" stroke-linecap="round"/>
<path d="M332.5 569.2C333.8 567.0 340.9 570.0 345.0 570.8C349.1 571.7 351.1 570.2 353.0 573.3C354.9 576.5 353.5 581.5 354.7 586.7C355.8 591.9 358.5 596.6 358.7 599.3C358.8 602.1 357.7 601.5 355.3 600.3C352.9 599.1 350.1 597.1 346.7 593.3C343.3 589.6 341.2 586.5 338.3 581.7C335.5 576.8 331.2 571.3 332.5 569.2Z" fill="#f3f0b4"/>
<path d="M352.5 573.0L390.0 573.0L394.2 587.0L389.3 574.7L385.3 582.0L381.0 576.7L376.7 582.0L372.0 576.7L368.3 582.0L364.3 575.8L361.7 580.3L358.3 575.8L355.7 582.0Z" fill="#f3f0b4"/>
<path d="M403.3 573.3C406.3 571.2 418.9 568.2 423.3 570.8C427.7 573.5 425.1 579.4 425.3 586.7C425.5 593.9 425.1 602.9 424.3 607.0C423.6 611.1 423.5 609.7 421.7 607.0C419.8 604.3 417.6 598.4 415.0 593.3C412.4 588.3 411.0 585.7 408.7 581.7C406.3 577.7 400.4 575.5 403.3 573.3Z" fill="#f3f0b4"/>
<path d="M368.8 626.2C369.6 625.7 371.8 629.9 375.0 632.5C378.2 635.1 378.7 635.8 382.5 637.5C386.3 639.2 386.3 639.3 391.2 640.0C396.2 640.7 400.5 639.5 403.8 640.6C407.0 641.8 406.1 643.1 405.2 645.0C404.4 646.9 402.7 647.0 400.0 648.8C397.3 650.5 397.0 652.2 393.8 652.5C390.5 652.8 390.0 652.0 386.2 650.0C382.5 648.0 381.0 647.2 377.5 643.8C374.0 640.2 373.3 639.1 371.2 635.0C369.2 630.9 367.9 626.8 368.8 626.2Z" fill="#f3f0b4"/>
<path d="M440.6 628.1C442.2 628.7 443.1 633.0 445.0 637.5C446.9 642.0 447.7 643.6 448.8 647.5C449.8 651.4 451.5 652.5 449.5 654.4C447.5 656.3 444.1 655.8 440.0 655.8C435.9 655.8 433.0 656.9 431.9 654.4C430.7 651.9 433.5 649.5 435.0 645.0C436.5 640.5 436.8 638.9 438.1 635.0C439.4 631.1 439.0 627.5 440.6 628.1Z" fill="#f3f0b4"/>
<path d="M394.0 652.5L393.8 645.6L397.5 645.0L399.4 648.1L402.5 647.8L405.0 650.0L408.8 648.8L411.9 650.6L415.0 649.0L418.8 651.2L422.5 648.8L426.2 650.0L430.0 655.0L412.5 654.4Z" fill="#f3f0b4"/>
<path d="M387.5 657.5C390.8 658.1 390.0 658.3 397.5 659.4C405.0 660.4 405.8 660.2 410.0 660.6" fill="none" stroke="#bdbdbd" stroke-width="1.1" stroke-linecap="round"/>
<path d="M335.0 562.0C335.0 561.2 337.0 564.8 340.0 566.7C343.0 568.5 346.0 570.1 350.0 571.3C354.0 572.5 356.3 572.3 360.0 572.7C363.7 573.1 362.3 573.2 368.3 573.3C374.3 573.5 385.3 572.0 390.0 573.3C394.7 574.7 393.0 579.3 391.7 580.0C390.3 580.7 387.7 577.5 383.3 576.7C379.0 575.8 376.0 576.3 370.0 575.8C364.0 575.3 359.3 575.2 353.3 574.2C347.3 573.2 343.7 573.3 340.0 570.8C336.3 568.4 335.0 562.8 335.0 562.0Z" fill="#000"/>
<path d="M371.3 587.5L373.0 599.2L363.3 607.0L372.7 613.7L367.0 620.3L379.7 628.7" fill="none" stroke="#000" stroke-width="3.6" stroke-linejoin="miter"/>
<path d="M307.5 517.5C309.5 515.1 309.8 516.7 316.7 515.8C323.6 514.9 325.8 514.8 333.3 514.2C340.9 513.5 338.8 512.9 345.0 513.3C351.2 513.8 352.1 514.5 356.7 515.8C361.2 517.2 361.6 516.3 362.0 518.3C362.4 520.3 361.1 520.7 358.3 523.3C355.6 526.0 356.6 526.6 351.7 528.3C346.8 530.1 344.8 528.2 340.0 530.0C335.2 531.8 333.7 532.8 333.7 535.0C333.7 537.2 336.5 536.6 340.0 538.3C343.5 540.1 345.3 539.0 346.7 541.7C348.0 544.3 346.8 545.2 345.0 548.3C343.2 551.4 343.1 552.0 340.0 553.3C336.9 554.7 336.9 554.7 333.3 553.3C329.8 552.0 330.2 551.4 326.7 548.3C323.1 545.2 323.6 545.7 320.0 541.7C316.4 537.7 316.2 537.8 313.3 533.3C310.4 528.9 310.7 529.2 309.2 525.0C307.6 520.8 305.5 519.9 307.5 517.5Z" fill="#d98a8e"/>
<path d="M307.5 517.5C307.9 515.1 309.8 516.7 316.7 515.8C323.6 514.9 325.8 514.8 333.3 514.2C340.9 513.5 338.8 512.9 345.0 513.3C351.2 513.8 352.1 514.5 356.7 515.8C361.2 517.2 361.6 516.3 362.0 518.3C362.4 520.3 361.1 520.9 358.3 523.3C355.6 525.8 356.6 526.1 351.7 527.5C346.8 528.9 345.3 528.0 340.0 528.7C334.7 529.3 336.1 530.1 331.7 530.0C327.2 529.9 327.8 529.7 323.3 528.3C318.9 527.0 319.2 527.9 315.0 525.0C310.8 522.1 307.1 519.9 307.5 517.5Z" fill="#eaa3a3"/>
<path d="M335.8 536.7C337.5 534.7 341.3 535.3 346.7 535.8C352.1 536.4 351.3 535.8 352.0 538.3C352.7 540.8 351.0 540.4 348.7 543.3C346.3 546.2 347.3 547.6 345.0 547.0C342.7 546.4 344.7 545.1 341.7 541.7C338.6 538.2 334.2 538.6 335.8 536.7Z" fill="#000"/>
<path d="M306.7 517.0C312.2 516.7 312.2 517.2 323.3 516.0C334.4 514.8 328.9 513.3 340.0 513.3C351.1 513.3 348.9 516.0 356.7 516.0C364.4 516.0 359.4 515.9 363.3 513.3C367.2 510.8 365.0 512.2 368.3 508.3C371.7 504.4 371.7 503.9 373.3 501.7" fill="none" stroke="#000" stroke-width="1.3" stroke-linecap="round"/>
<path d="M345.8 546.7C345.1 548.9 344.6 548.9 343.7 553.3C342.7 557.8 341.7 555.8 343.0 560.0C344.3 564.2 342.9 562.2 347.5 565.8C352.1 569.4 353.6 569.2 356.7 570.8" fill="none" stroke="#000" stroke-width="2.2" stroke-linecap="round"/>
<path d="M383.3 530.0C391.1 527.9 387.8 528.6 406.7 523.7C425.6 518.8 417.8 520.4 440.0 515.3C462.2 510.2 456.7 511.8 473.3 508.3C490.0 504.9 484.4 506.1 490.0 505.0" fill="none" stroke="#000" stroke-width="1.4" stroke-linecap="round"/>
<path d="M371.7 548.7C377.8 548.0 375.0 550.0 390.0 546.7C405.0 543.3 400.0 544.2 416.7 538.7C433.3 533.1 426.7 534.6 440.0 530.0C453.3 525.4 451.1 526.7 456.7 525.0" fill="none" stroke="#000" stroke-width="1.2" stroke-linecap="round" stroke-dasharray="3 1.5 6 1 20 0"/>
<path d="M391.7 562.0C398.9 561.9 397.2 564.0 413.3 561.7C429.4 559.3 423.3 560.0 440.0 555.0C456.7 550.0 455.6 549.4 463.3 546.7" fill="none" stroke="#000" stroke-width="1.2" stroke-linecap="round" stroke-dasharray="2 1.5 5 1 20 0"/>
<g clip-path="url(#tsil)">
<path d="M440.0 376.7C441.4 373.9 443.0 372.8 445.0 375.0C447.0 377.2 446.6 377.2 446.0 383.3C445.4 389.4 445.3 390.4 443.3 393.3C441.3 396.2 440.8 395.3 440.0 392.0C439.2 388.7 440.8 388.4 440.8 383.3C440.8 378.2 438.6 379.4 440.0 376.7Z" fill="#000"/>
<path d="M451.7 368.3C456.3 365.2 461.2 362.6 466.7 363.3C472.1 364.1 471.8 368.9 475.0 371.7C478.2 374.4 479.9 372.7 480.3 375.0C480.7 377.3 478.7 378.6 476.7 381.7C474.6 384.8 474.0 385.9 471.7 388.3C469.3 390.7 467.1 393.2 466.7 392.0C466.3 390.8 470.0 386.5 470.0 383.3C470.0 380.1 469.0 380.7 466.7 378.3C464.3 376.0 463.1 374.1 460.0 373.3C456.9 372.6 454.1 372.7 453.3 375.0C452.6 377.3 456.3 378.7 456.7 383.3C457.1 388.0 456.6 389.9 455.0 395.0C453.4 400.1 453.5 400.7 450.0 405.0C446.5 409.3 443.9 410.1 440.0 413.3C436.1 416.5 433.3 420.2 433.3 418.7C433.3 417.1 436.9 411.8 440.0 406.7C443.1 401.5 444.7 401.7 446.7 396.7C448.6 391.6 448.3 389.7 448.3 385.0C448.3 380.3 445.9 380.6 446.7 376.7C447.4 372.8 447.0 371.4 451.7 368.3Z" fill="#000"/>
<path d="M465.0 398.3C468.3 394.9 467.2 396.9 476.7 393.3C486.1 389.7 486.0 388.6 493.3 387.5C500.7 386.4 500.9 386.9 498.7 390.0C496.4 393.1 495.1 392.8 486.7 396.7C478.2 400.6 480.0 399.3 473.3 401.7C466.7 404.0 469.4 404.8 466.7 403.7C463.9 402.6 461.7 401.8 465.0 398.3Z" fill="#000"/>
<path d="M426.7 448.0C426.3 446.9 429.8 443.4 433.3 440.0C436.8 436.6 438.9 436.4 441.7 433.3C444.4 430.2 442.7 429.6 445.0 426.7C447.3 423.8 447.8 422.9 451.7 420.8C455.6 418.8 457.4 418.3 461.7 418.0C465.9 417.7 466.5 420.8 470.0 419.7C473.5 418.6 471.2 416.4 476.7 413.3C482.1 410.3 486.3 409.4 493.3 406.7C500.3 403.9 500.8 404.0 506.7 401.7C512.5 399.3 513.7 398.3 518.3 396.7C523.0 395.0 524.3 394.3 526.7 394.7C529.1 395.1 530.6 395.5 528.7 398.3C526.7 401.1 522.7 403.5 518.3 406.7C514.0 409.9 514.7 410.4 510.0 412.0C505.3 413.6 503.8 412.5 498.3 413.7C492.9 414.8 491.3 415.1 486.7 417.0C482.1 418.9 480.5 419.0 478.7 422.0C476.8 425.0 479.5 426.2 478.7 430.0C477.8 433.8 477.4 435.2 475.0 438.3C472.6 441.4 471.8 441.7 468.3 443.3C464.8 445.0 463.9 445.3 460.0 445.3C456.1 445.4 455.6 444.8 451.7 443.7C447.8 442.5 447.2 440.1 443.3 440.3C439.4 440.6 438.9 442.9 435.0 444.7C431.1 446.5 427.1 449.1 426.7 448.0Z" fill="#000"/>
<path d="M468.3 423.3C470.0 417.8 470.6 421.1 476.7 418.3C482.8 415.6 480.0 416.9 486.7 415.0C493.3 413.1 496.7 410.8 496.7 412.5C496.7 414.2 493.3 414.7 486.7 420.0C480.0 425.3 481.7 423.3 476.7 428.3C471.7 433.3 474.4 436.7 471.7 435.0C468.9 433.3 466.7 428.9 468.3 423.3Z" fill="#fff"/>
<path d="M472.5 443.8C473.7 441.5 479.0 443.3 482.5 441.9C486.0 440.4 486.9 439.7 487.5 437.5C488.1 435.3 484.4 434.8 485.0 432.5C485.6 430.2 487.1 430.1 490.0 427.5C492.9 424.9 493.4 423.3 497.5 421.2C501.6 419.2 503.1 420.2 507.5 418.8C511.9 417.3 510.4 415.9 516.2 415.0C522.1 414.1 528.7 413.0 532.5 415.0C536.3 417.0 533.1 420.2 532.5 423.8C531.9 427.2 530.0 427.1 530.0 430.0C530.0 432.9 530.5 433.3 532.5 436.2C534.5 439.2 535.8 439.3 538.8 442.5C541.7 445.7 543.8 446.5 545.0 450.0C546.2 453.5 546.7 454.9 543.8 457.5C540.8 460.1 538.0 460.4 532.5 461.2C527.0 462.1 525.8 461.1 520.0 461.2C514.2 461.4 513.3 462.1 507.5 461.9C501.7 461.6 500.2 461.5 495.0 460.2C489.8 459.0 489.1 458.5 485.0 456.5C480.9 454.5 480.4 454.5 477.5 451.5C474.6 448.5 471.3 446.0 472.5 443.8Z" fill="#000"/>
<path d="M490.0 438.8C491.5 435.2 491.7 434.8 495.0 433.8C498.3 432.8 499.2 436.0 502.5 435.0C505.8 434.0 504.2 432.7 507.5 430.0C510.8 427.3 510.7 425.7 515.0 425.0C519.3 424.3 520.4 424.5 523.8 427.5C527.1 430.5 525.2 431.6 527.5 436.2C529.8 440.9 531.8 440.7 532.5 445.0C533.2 449.3 533.3 450.8 530.0 452.5C526.7 454.2 524.7 451.2 520.0 451.2C515.3 451.3 516.5 451.8 512.5 452.8C508.5 453.8 509.7 455.0 505.0 455.0C500.3 455.0 499.2 454.9 495.0 452.8C490.8 450.6 490.7 450.6 489.4 446.9C488.0 443.1 488.5 442.2 490.0 438.8Z" fill="#d9761f"/>
<path d="M443.8 460.0C443.8 459.1 449.0 463.7 452.5 465.6C456.0 467.6 457.2 469.2 461.2 469.8C465.2 470.3 467.8 468.5 472.5 468.5C477.2 468.5 480.5 468.5 485.0 469.8C489.5 471.0 490.5 473.7 495.0 474.8C499.5 475.8 502.5 475.2 507.5 475.0C512.5 474.8 515.0 473.3 520.0 473.5C525.0 473.7 527.5 475.0 532.5 476.0C537.5 477.0 541.0 478.9 545.0 478.5C549.0 478.1 551.5 475.9 552.5 473.8C553.5 471.6 551.5 470.0 550.0 467.5C548.5 465.0 546.2 463.8 545.0 461.2C543.8 458.8 543.8 457.2 543.8 455.0C543.8 452.8 541.5 451.0 545.0 450.0C548.5 449.0 557.8 445.5 561.2 450.0C564.8 454.5 563.2 465.5 562.5 472.5C561.8 479.5 557.8 481.0 557.5 485.0C557.2 489.0 559.2 489.5 561.2 492.5C563.2 495.5 565.2 497.0 567.5 500.0C569.8 503.0 571.6 503.5 572.8 507.5C573.9 511.5 573.7 515.0 573.1 520.0C572.6 525.0 571.9 528.5 570.0 532.5C568.1 536.5 565.5 535.0 563.8 540.0C562.0 545.0 567.5 554.0 561.2 557.5C555.0 561.0 538.0 561.0 532.5 557.5C527.0 554.0 534.2 545.0 533.8 540.0C533.2 535.0 531.0 536.5 530.0 532.5C529.0 528.5 528.8 525.5 528.8 520.0C528.8 514.5 529.2 509.5 530.0 505.0C530.8 500.5 533.0 499.8 532.5 497.5C532.0 495.2 530.0 494.8 527.5 493.8C525.0 492.8 523.5 492.2 520.0 492.5C516.5 492.8 513.5 493.5 510.0 495.0C506.5 496.5 505.5 500.0 502.5 500.0C499.5 500.0 498.5 497.0 495.0 495.0C491.5 493.0 488.2 490.5 485.0 490.0C481.8 489.5 480.8 493.5 478.8 492.5C476.8 491.5 476.8 487.5 475.0 485.0C473.2 482.5 472.8 482.0 470.0 480.0C467.2 478.0 464.8 477.0 461.2 475.0C457.8 473.0 456.0 473.0 452.5 470.0C449.0 467.0 443.8 460.9 443.8 460.0Z" fill="#000"/>
<path d="M551.2 505.0C553.0 505.0 553.2 506.2 555.0 507.5C556.8 508.8 559.2 509.2 560.0 511.2C560.8 513.2 559.8 515.0 558.8 517.5C557.8 520.0 557.0 522.4 555.0 523.8C553.0 525.1 551.0 525.1 548.8 524.4C546.5 523.6 544.9 522.4 543.8 520.0C542.6 517.6 542.6 515.0 543.1 512.5C543.6 510.0 544.6 509.0 546.2 507.5C547.9 506.0 549.5 505.0 551.2 505.0Z" fill="#fff"/>
<path d="M545.0 532.5C546.2 528.1 548.1 529.0 550.0 533.1C551.9 537.3 551.9 540.6 550.6 545.0C549.4 549.4 548.1 550.4 546.2 546.2C544.4 542.1 543.8 536.9 545.0 532.5Z" fill="#fff"/>
<path d="M475.0 495.0C476.5 493.2 481.5 497.1 485.0 500.0C488.5 502.9 486.5 504.6 490.0 507.5C493.5 510.4 494.2 511.9 500.0 512.5C505.8 513.1 509.2 510.0 515.0 510.0C520.8 510.0 523.8 510.2 525.0 512.5C526.2 514.8 524.1 516.8 520.0 520.0C515.9 523.2 508.7 523.3 507.5 526.2C506.3 529.2 512.7 528.1 515.0 532.5C517.3 536.9 518.7 539.2 517.5 545.0C516.3 550.8 516.4 554.6 510.0 557.5C503.6 560.4 493.5 560.4 490.0 557.5C486.5 554.6 494.4 550.8 495.0 545.0C495.6 539.2 494.8 538.3 492.5 532.5C490.2 526.7 488.2 525.8 485.0 520.0C481.8 514.2 481.1 513.3 478.8 507.5C476.4 501.7 473.5 496.8 475.0 495.0Z" fill="#000"/>
<path d="M413.3 446.7C415.6 443.9 417.2 443.9 423.3 446.7C429.4 449.4 426.7 448.3 431.7 455.0C436.7 461.7 437.8 462.8 438.3 466.7C438.9 470.6 437.8 468.9 433.3 466.7C428.9 464.4 430.6 463.9 425.0 460.0C419.4 456.1 420.6 459.4 416.7 455.0C412.8 450.6 411.1 449.4 413.3 446.7Z" fill="#8c2a14"/>
</g>
<circle cx="457.3" cy="431.3" r="11.3" fill="#8dc63a" stroke="#2f4f0c" stroke-width="1"/>
<circle cx="457" cy="431" r="3.400" fill="#000"/>
<path d="M451.500 425.500a8 8 0 0 1 9-1.500" stroke="#b5e06a" stroke-width="1.200" fill="none"/>
<g clip-path="url(#tsil)">
<path d="M360.0 371.7C362.8 371.7 365.0 373.9 366.7 380.0C368.3 386.1 366.6 383.9 365.0 390.0C363.4 396.1 361.9 391.0 362.0 398.3C362.1 405.7 366.6 410.2 365.3 412.0C364.1 413.8 361.2 411.0 358.3 403.7C355.4 396.3 356.7 397.9 356.7 390.0C356.7 382.1 357.2 386.1 358.3 380.0C359.4 373.9 357.2 371.7 360.0 371.7Z" fill="#000"/>
<path d="M350.0 373.3C353.9 369.3 358.8 367.4 360.0 369.7C361.2 371.9 356.4 373.2 353.7 380.0C350.9 386.8 351.2 384.3 351.7 390.0C352.1 395.7 355.6 396.3 355.0 397.0C354.4 397.7 352.2 397.1 350.0 392.0C347.8 386.9 348.3 387.9 348.3 381.7C348.3 375.4 346.1 377.3 350.0 373.3Z" fill="#000"/>
<path d="M335.0 395.0C337.2 392.7 339.4 391.3 343.3 393.0C347.2 394.7 343.3 395.4 346.7 400.0C350.0 404.6 352.8 404.2 353.3 406.7C353.9 409.2 352.2 408.6 348.3 407.5C344.4 406.4 345.6 405.8 341.7 403.3C337.8 400.8 338.9 402.8 336.7 400.0C334.4 397.2 332.8 397.3 335.0 395.0Z" fill="#000"/>
<path d="M345.8 413.3C348.6 409.9 351.0 410.8 355.0 413.0C359.0 415.2 357.7 415.4 357.8 420.0C357.9 424.6 357.9 424.1 355.3 426.7C352.7 429.3 352.9 428.9 350.0 427.8C347.1 426.7 348.1 428.2 346.7 423.3C345.3 418.5 343.1 416.8 345.8 413.3Z" fill="#8dc63a"/>
<circle cx="351.3" cy="418.500" r="2" fill="#000"/>
<path d="M328.3 423.3C332.2 424.4 330.6 427.1 336.7 430.0C342.8 432.9 341.0 430.9 346.7 432.0C352.3 433.1 352.6 431.7 353.7 433.3C354.8 435.0 354.6 435.8 350.0 437.0C345.4 438.2 346.7 438.2 340.0 437.0C333.3 435.8 335.0 436.8 330.0 433.3C325.0 429.9 325.6 430.0 325.0 426.7C324.4 423.3 324.4 422.2 328.3 423.3Z" fill="#000"/>
<path d="M341.7 410.0C342.2 408.0 344.8 410.7 345.8 413.3C346.9 416.0 346.0 420.3 347.0 423.3C348.0 426.3 348.9 427.4 350.8 428.3C352.8 429.3 354.8 430.0 356.7 428.0C358.5 426.0 359.7 421.3 360.0 418.3C360.3 415.4 357.7 414.0 358.3 413.3C359.0 412.7 362.7 412.3 363.3 415.0C364.0 417.7 363.3 423.0 361.7 426.7C360.0 430.3 357.7 432.5 355.0 433.3C352.3 434.2 350.7 432.8 348.3 430.8C346.0 428.8 344.7 427.5 343.3 423.3C342.0 419.2 341.2 412.0 341.7 410.0Z" fill="#000"/>
<path d="M320.0 445.0C322.5 444.4 321.7 446.7 326.7 448.3C331.7 450.0 332.8 448.1 335.0 450.0C337.2 451.9 336.7 453.1 333.3 454.2C330.0 455.3 329.7 454.7 325.0 453.3C320.3 451.9 320.8 452.8 319.2 450.0C317.5 447.2 317.5 445.6 320.0 445.0Z" fill="#000"/>
<path d="M413.3 353.3C411.1 357.2 411.1 358.3 406.7 365.0C402.2 371.7 404.4 366.7 400.0 373.3C395.6 380.0 395.6 381.1 393.3 385.0" fill="none" stroke="#000" stroke-width="1.6" stroke-linecap="round"/>
<path d="M393.3 385.0C390.6 383.9 390.6 383.3 385.0 381.7C379.4 380.0 379.4 380.6 376.7 380.0" fill="none" stroke="#000" stroke-width="1.6" stroke-linecap="round"/>
<path d="M393.3 385.0C389.4 388.3 388.3 388.6 381.7 395.0C375.0 401.4 376.1 401.1 373.3 404.2" fill="none" stroke="#000" stroke-width="1.6" stroke-linecap="round"/>
<path d="M395.0 385.0C392.8 389.4 391.7 390.0 388.3 398.3C385.0 406.7 386.1 406.1 385.0 410.0" fill="none" stroke="#000" stroke-width="1.6" stroke-linecap="round"/>
<path d="M400.0 388.3C400.0 392.8 400.6 392.8 400.0 401.7C399.4 410.6 398.9 410.6 398.3 415.0" fill="none" stroke="#000" stroke-width="1.6" stroke-linecap="round"/>
<path d="M403.3 385.0C405.6 386.7 405.6 386.4 410.0 390.0C414.4 393.6 414.4 393.9 416.7 395.8" fill="none" stroke="#000" stroke-width="1.6" stroke-linecap="round"/>
<path d="M416.7 376.7C417.8 378.3 417.5 378.6 420.0 381.7C422.5 384.7 422.8 384.4 424.2 385.8" fill="none" stroke="#000" stroke-width="1.6" stroke-linecap="round"/>
<path d="M383.3 360.0C381.1 361.7 381.1 362.8 376.7 365.0C372.2 367.2 372.2 366.1 370.0 366.7" fill="none" stroke="#000" stroke-width="1.6" stroke-linecap="round"/>
<path d="M403.3 370.0C405.6 371.1 405.0 371.4 410.0 373.3C415.0 375.3 415.6 375.0 418.3 375.8" fill="none" stroke="#000" stroke-width="1.6" stroke-linecap="round"/>
<path d="M360.0 455.0C368.3 452.9 368.3 451.4 385.0 448.7C401.7 445.9 396.1 446.1 410.0 446.7C423.9 447.2 421.1 449.1 426.7 450.3" fill="none" stroke="#7a2412" stroke-width="1.3" stroke-linecap="round"/>
<path d="M358.3 473.3C364.4 470.1 362.2 469.1 376.7 463.7C391.1 458.2 386.1 458.1 401.7 457.0C417.2 455.9 416.1 459.2 423.3 460.3" fill="none" stroke="#7a2412" stroke-width="1.3" stroke-linecap="round"/>
<path d="M373.3 478.7C378.9 475.9 377.8 474.8 390.0 470.3C402.2 465.9 397.8 466.4 410.0 465.3C422.2 464.2 421.1 466.4 426.7 467.0" fill="none" stroke="#7a2412" stroke-width="1.3" stroke-linecap="round"/>
</g>
<path d="M301.2 477.5C300.0 471.7 301.2 471.7 297.5 460.0C293.8 448.3 295.0 451.2 290.0 442.5C285.0 433.8 285.0 436.7 282.5 433.8" fill="none" stroke="#fff" stroke-width="1.1" stroke-linecap="round"/>
<path d="M296.2 483.8C293.3 477.5 294.6 475.4 287.5 465.0C280.4 454.6 282.9 458.8 275.0 452.5C267.1 446.2 267.5 448.3 263.8 446.2" fill="none" stroke="#fff" stroke-width="1.1" stroke-linecap="round"/>
<path d="M293.8 490.0C289.2 485.0 290.4 483.3 280.0 475.0C269.6 466.7 272.9 469.3 262.5 465.0C252.1 460.7 253.3 463.0 248.8 462.0" fill="none" stroke="#fff" stroke-width="1.1" stroke-linecap="round"/>
<path d="M292.5 497.5C286.7 493.3 286.7 491.2 275.0 485.0C263.3 478.8 268.3 481.2 257.5 478.8C246.7 476.2 247.5 477.9 242.5 477.5" fill="none" stroke="#fff" stroke-width="1.1" stroke-linecap="round"/>
<path d="M292.0 501.2C286.3 498.3 287.3 497.5 275.0 492.5C262.7 487.5 266.2 488.3 255.0 486.2C243.8 484.2 245.8 486.2 241.2 486.2" fill="none" stroke="#fff" stroke-width="1.1" stroke-linecap="round"/>
<path d="M292.5 510.0C288.3 507.5 289.2 505.8 280.0 502.5C270.8 499.2 272.5 499.6 265.0 500.0C257.5 500.4 260.0 502.5 257.5 503.8" fill="none" stroke="#fff" stroke-width="1.1" stroke-linecap="round"/>
<path d="M293.8 512.5C287.5 511.7 286.2 510.8 275.0 510.0C263.8 509.2 268.8 509.6 260.0 510.0C251.2 510.4 252.5 510.8 248.8 511.2" fill="none" stroke="#fff" stroke-width="1.1" stroke-linecap="round"/>
<path d="M292.5 520.0C286.7 519.2 287.5 517.1 275.0 517.5C262.5 517.9 264.6 518.6 255.0 521.2C245.4 523.9 249.2 524.1 246.2 525.5" fill="none" stroke="#fff" stroke-width="1.1" stroke-linecap="round"/>
<path d="M295.0 525.0C291.7 524.6 291.7 522.5 285.0 523.8C278.3 525.0 278.3 527.1 275.0 528.8" fill="none" stroke="#fff" stroke-width="1.1" stroke-linecap="round"/>
<path d="M293.8 503.8C287.5 504.3 287.1 503.0 275.0 505.5C262.9 508.0 266.2 508.1 257.5 511.2C248.8 514.4 251.7 513.8 248.8 515.0" fill="none" stroke="#fff" stroke-width="1.1" stroke-linecap="round"/>
<path d="M293.8 517.5C289.6 518.8 288.8 517.1 281.2 521.2C273.8 525.4 274.6 527.1 271.2 530.0" fill="none" stroke="#fff" stroke-width="1.1" stroke-linecap="round"/>
<path d="M295.5 530.0C290.8 532.5 289.3 532.1 281.2 537.5C273.2 542.9 274.6 543.3 271.2 546.2" fill="none" stroke="#fff" stroke-width="1.1" stroke-linecap="round"/>
<path d="M298.8 541.2C293.8 544.2 291.2 543.8 283.8 550.0C276.2 556.2 278.8 556.7 276.2 560.0" fill="none" stroke="#fff" stroke-width="1.1" stroke-linecap="round"/>
<path d="M330.0 410.0C328.3 409.8 327.9 409.8 325.0 409.2C322.1 408.8 322.5 408.8 321.2 408.5" fill="none" stroke="#fff" stroke-width="1.1" stroke-linecap="round"/>
<path d="M420.0 497.5C422.5 491.7 421.2 491.2 427.5 480.0C433.8 468.8 429.6 472.9 438.8 463.8C447.9 454.6 445.4 456.7 455.0 452.5C464.6 448.3 463.3 451.7 467.5 451.2" fill="none" stroke="#fff" stroke-width="1.1" stroke-linecap="round"/>
<path d="M420.0 500.0C426.2 490.8 424.2 488.8 438.8 472.5C453.3 456.2 445.0 462.5 463.8 451.2C482.5 440.0 476.7 444.2 495.0 438.8C513.3 433.3 510.8 436.2 518.8 435.0" fill="none" stroke="#fff" stroke-width="1.1" stroke-linecap="round"/>
<path d="M420.0 501.2C430.4 492.1 426.2 489.2 451.2 473.8C476.2 458.3 463.8 464.6 495.0 455.0C526.2 445.4 518.3 449.4 545.0 445.0C571.7 440.6 565.0 442.9 575.0 441.9" fill="none" stroke="#fff" stroke-width="1.1" stroke-linecap="round"/>
<path d="M420.0 502.5C432.5 495.8 428.3 494.2 457.5 482.5C486.7 470.8 474.2 475.4 507.5 467.5C540.8 459.6 528.3 462.3 557.5 458.8C586.7 455.2 582.5 457.5 595.0 456.9" fill="none" stroke="#fff" stroke-width="1.1" stroke-linecap="round"/>
<path d="M420.0 506.2C432.5 502.1 432.5 502.9 457.5 493.8C482.5 484.6 470.0 487.1 495.0 478.8C520.0 470.4 513.8 472.9 532.5 468.8C551.2 464.6 545.0 467.1 551.2 466.2" fill="none" stroke="#fff" stroke-width="1.1" stroke-linecap="round"/>
<path d="M472.5 515.0C488.3 514.2 487.5 513.8 520.0 512.5C552.5 511.2 543.3 511.2 570.0 511.2C596.7 511.2 590.0 512.1 600.0 512.5" fill="none" stroke="#fff" stroke-width="1.1" stroke-linecap="round"/>
<path d="M482.5 528.8C499.2 529.2 499.2 528.8 532.5 530.0C565.8 531.2 560.0 530.4 582.5 532.5C605.0 534.6 594.2 535.0 600.0 536.2" fill="none" stroke="#fff" stroke-width="1.1" stroke-linecap="round"/>
<path d="M470.0 517.5C486.7 515.8 486.7 515.0 520.0 512.5C553.3 510.0 553.3 510.8 570.0 510.0" fill="none" stroke="#fff" stroke-width="1.1" stroke-linecap="round"/>
<path d="M532.5 528.8C549.2 530.8 555.0 531.2 582.5 535.0C610.0 538.8 604.2 538.3 615.0 540.0" fill="none" stroke="#fff" stroke-width="1.1" stroke-linecap="round"/>
<path d="M495.0 537.5C511.7 543.3 515.0 545.8 545.0 555.0C575.0 564.2 571.7 561.7 585.0 565.0" fill="none" stroke="#fff" stroke-width="1.1" stroke-linecap="round"/>
<path d="M470.0 550.0C482.5 555.0 482.5 556.7 507.5 565.0C532.5 573.3 532.5 571.7 545.0 575.0" fill="none" stroke="#fff" stroke-width="1.1" stroke-linecap="round"/>
<path d="M460.0 530.0C468.3 532.5 468.3 530.8 485.0 537.5C501.7 544.2 495.0 541.7 510.0 550.0C525.0 558.3 523.3 558.3 530.0 562.5" fill="none" stroke="#fff" stroke-width="1.1" stroke-linecap="round"/>
<path d="M450.0 566.7C455.0 570.0 455.6 570.0 465.0 576.7C474.4 583.3 473.9 583.3 478.3 586.7" fill="none" stroke="#fff" stroke-width="1.1" stroke-linecap="round"/>
<path d="M440.0 570.0C441.7 573.3 442.5 572.2 445.0 580.0C447.5 587.8 446.7 588.9 447.5 593.3" fill="none" stroke="#fff" stroke-width="1.1" stroke-linecap="round"/>
<path d="M456.7 563.3C462.2 566.7 462.2 567.2 473.3 573.3C484.4 579.4 484.4 578.9 490.0 581.7" fill="none" stroke="#fff" stroke-width="1.1" stroke-linecap="round"/>
<path d="M383.3 586.7C378.9 591.1 377.8 591.7 370.0 600.0C362.2 608.3 363.3 607.8 360.0 611.7" fill="none" stroke="#fff" stroke-width="1.1" stroke-linecap="round"/>
<path d="M383.3 596.7C380.0 601.1 380.0 601.1 373.3 610.0C366.7 618.9 366.7 618.9 363.3 623.3" fill="none" stroke="#fff" stroke-width="1.1" stroke-linecap="round"/>
<path d="M386.7 606.7C383.3 611.7 382.8 612.2 376.7 621.7C370.6 631.1 371.1 630.6 368.3 635.0" fill="none" stroke="#fff" stroke-width="1.1" stroke-linecap="round"/>
<path d="M452.5 470.0C460.4 480.4 462.1 484.6 476.2 501.2C490.4 517.9 482.1 508.8 495.0 520.0C507.9 531.2 506.7 526.7 515.0 535.0C523.3 543.3 518.3 541.7 520.0 545.0" fill="none" stroke="#fff" stroke-width="1.8" stroke-linecap="round"/>
<g clip-path="url(#tsil)">
<path d="M523.1 433.1C524.0 427.5 524.4 428.1 530.6 431.9C536.9 435.6 535.6 435.8 541.9 444.4C548.1 452.9 545.2 447.1 549.4 457.5C553.5 467.9 557.3 469.8 554.4 475.6C551.5 481.5 547.5 479.6 540.6 475.0C533.8 470.4 537.9 470.6 533.8 461.9C529.6 453.1 531.7 458.3 528.1 448.8C524.6 439.2 522.3 438.8 523.1 433.1Z" fill="#fff" filter="url(#tb1)" opacity="0.92"/>
<path d="M678.8 507.5C681.7 507.1 684.6 510.8 690.0 522.5C695.4 534.2 692.9 531.2 695.0 542.5C697.1 553.8 698.8 557.1 696.2 556.2C693.8 555.4 692.5 550.8 687.5 540.0C682.5 529.2 684.2 534.6 681.2 523.8C678.3 512.9 675.8 507.9 678.8 507.5Z" fill="#dcdcdc"/>
<path d="M660.0 537.5C663.3 537.1 665.0 542.5 675.0 550.0C685.0 557.5 689.2 557.1 690.0 560.0C690.8 562.9 685.8 561.7 677.5 558.8C669.2 555.8 670.8 558.3 665.0 551.2C659.2 544.2 656.7 537.9 660.0 537.5Z" fill="#dcdcdc"/>
<path d="M660.0 605.0C662.5 605.0 662.5 605.8 670.0 617.5C677.5 629.2 682.5 635.8 682.5 640.0C682.5 644.2 676.7 637.5 670.0 630.0C663.3 622.5 665.8 625.8 662.5 617.5C659.2 609.2 657.5 605.0 660.0 605.0Z" fill="#dcdcdc"/>
<path d="M682.5 580.0C684.2 578.3 689.6 587.5 695.0 600.0C700.4 612.5 700.4 615.8 698.8 617.5C697.1 619.2 695.4 617.5 690.0 605.0C684.6 592.5 680.8 581.7 682.5 580.0Z" fill="#e2e2e2"/>
</g>
<g clip-path="url(#tsil)">
<path d="M422.5 350.0C426.0 348.7 429.2 349.5 427.5 353.0C425.8 356.5 420.2 359.3 415.0 365.0C409.8 370.7 409.1 371.7 405.0 377.5C400.9 383.3 400.4 384.8 397.5 390.0C394.6 395.2 394.2 398.0 392.5 400.0C390.8 402.0 389.7 402.2 390.0 398.8C390.3 395.2 390.8 391.7 393.8 385.0C396.7 378.3 398.1 376.1 402.5 370.0C406.9 363.9 407.8 363.4 412.5 358.8C417.2 354.1 419.0 351.3 422.5 350.0Z" fill="#000"/>
<path d="M366.2 358.8C368.9 358.2 369.2 360.2 375.0 360.5C380.8 360.8 380.6 359.0 383.8 359.5C386.9 360.0 387.4 360.7 384.5 362.0C381.6 363.3 380.8 363.5 375.0 363.5C369.2 363.5 369.9 363.6 367.0 362.0C364.1 360.4 363.6 359.2 366.2 358.8Z" fill="#000"/>
<path d="M390.0 390.0C386.7 393.3 385.8 393.3 380.0 400.0C374.2 406.7 375.0 406.7 372.5 410.0" fill="none" stroke="#000" stroke-width="2.0" stroke-linecap="round"/>
<path d="M395.0 387.5C394.2 392.5 393.8 393.3 392.5 402.5C391.2 411.7 391.7 410.8 391.2 415.0" fill="none" stroke="#000" stroke-width="1.8" stroke-linecap="round"/>
<path d="M402.5 385.0C405.8 387.5 406.7 387.5 412.5 392.5C418.3 397.5 417.5 397.5 420.0 400.0" fill="none" stroke="#000" stroke-width="1.6" stroke-linecap="round"/>
<path d="M324.5 420.0C327.7 420.0 326.5 421.8 332.5 425.0C338.5 428.2 336.2 427.0 342.5 429.5C348.8 432.0 349.6 430.0 351.2 432.5C352.9 435.0 352.1 436.2 347.5 437.0C342.9 437.8 343.8 437.3 337.5 435.0C331.2 432.7 333.6 433.3 328.8 430.0C323.9 426.7 324.4 428.3 323.0 425.0C321.6 421.7 321.3 420.0 324.5 420.0Z" fill="#000"/>
<path d="M318.8 444.5C321.5 444.0 320.8 446.2 326.2 448.0C331.7 449.8 332.5 447.8 335.0 450.0C337.5 452.2 337.1 453.2 333.8 454.5C330.4 455.8 330.2 455.4 325.0 453.8C319.8 452.1 320.1 452.6 318.0 449.5C315.9 446.4 316.0 445.0 318.8 444.5Z" fill="#000"/>
<path d="M316.2 461.2C313.8 467.1 312.7 467.1 308.8 478.8C304.8 490.4 305.8 485.8 304.5 496.2C303.2 506.7 304.8 505.4 305.0 510.0" fill="none" stroke="#a8501a" stroke-width="1.4" stroke-linecap="round"/>
<path d="M305.0 472.5C303.3 477.5 302.7 478.3 300.0 487.5C297.3 496.7 298.0 495.8 297.0 500.0" fill="none" stroke="#e9a469" stroke-width="1.6" stroke-linecap="round"/>
</g>
<path d="M583.0 311.2C582.0 315.8 580.2 315.4 580.0 325.0C579.8 334.6 579.3 331.2 582.5 340.0C585.7 348.8 585.3 345.8 589.5 351.2C593.7 356.7 593.2 354.6 595.0 356.2" fill="none" stroke="#d9761f" stroke-width="2.2" stroke-linecap="round"/>
</g><!--/TIGER-->
</defs></svg>

<div id="lw" class="abs">
 <div class="abs cv"><svg class="abs" style="left:0;top:0" width="960" height="963" viewBox="0 31 960 963"><use href="#tiger"/></svg></div>
 <div class="abs tb"><svg class="abs" style="left:9px;top:6px" width="16" height="16"><use href="#i-app"/></svg><span class="ttl" style="color:#9a9a9a">RGByte Image Viewer</span>
  <svg class="abs" style="left:820px;top:0" width="140" height="30" fill="none" stroke="#9d9d9d" stroke-width="1"><path d="M20 14.500H30M65.500 9.500h9v9h-9zM111 9.500l10 10M121 9.500l-10 10"/></svg></div>
 <div class="pn" style="left:13px;top:822px;width:172px;height:153px;background:#eeeeee;color:#555">
  <div class="fs" style="top:13px;border-color:#a9a9a9"><span class="lg" style="background:#eeeeee">Color 1 Hex</span><span class="vl">001166</span></div>
  <div class="ct" style="top:52px">0/6</div>
  <div class="fs" style="top:87px;border-color:#a9a9a9"><span class="lg" style="background:#eeeeee">Color 2 Hex</span><span class="vl">AA0066</span></div>
  <div class="ct" style="top:126px">0/6</div>
 </div>
 <div class="abs bar" style="fill:#333">
  <svg class="ic" style="left:9px"><use href="#i-gear"/></svg>
  <svg class="ic" style="left:49px"><use href="#i-folder"/></svg>
  <svg class="ic" style="left:288px;fill:#8f8f8f"><use href="#i-hq"/></svg>
  <svg class="ic" style="left:328px;fill:#8f8f8f"><use href="#i-img"/></svg>
  <svg class="ic" style="left:368px"><use href="#i-fit"/></svg>
  <svg class="ic" style="left:408px"><use href="#i-full"/></svg>
  <svg class="ic" style="left:448px"><use href="#i-al"/></svg>
  <svg class="ic" style="left:488px"><use href="#i-ar"/></svg>
  <svg class="ic" style="left:528px"><use href="#i-rl"/></svg>
  <svg class="ic" style="left:568px"><use href="#i-rr"/></svg>
  <svg class="ic" style="left:608px"><use href="#i-zi"/></svg>
  <svg class="ic" style="left:648px"><use href="#i-zo"/></svg>
  <div class="zb">50%</div>
 </div>
 <div class="abs" style="left:0;top:0;width:1px;height:1039px;background:#222"></div>
 <div class="abs" style="left:959px;top:0;width:1px;height:1039px;background:#000"></div>
</div>

<div id="rw" class="abs">
 <div class="abs cv"><svg class="abs" style="left:0;top:0" width="960" height="963" viewBox="0 31 960 963"><use href="#tiger"/></svg></div>
 <div class="abs tb"><svg class="abs" style="left:9px;top:6px" width="16" height="16"><use href="#i-app"/></svg><span class="ttl" style="color:#000">RGByte Image Viewer</span>
  <svg class="abs" style="left:820px;top:0" width="140" height="30" fill="none" stroke="#000" stroke-width="1"><path d="M20 14.500H30M65.500 9.500h9v9h-9zM111 9.500l10 10M121 9.500l-10 10"/></svg></div>
 <div class="pn" style="left:16px;top:835px;width:171px;height:148px;background:#1e1e1e;color:#e4e4e4">
  <div class="fs" style="left:11px;top:10px;border-color:#777"><span class="lg" style="background:#1e1e1e">Color 1 Hex</span><span class="vl" style="color:#fff">000000</span></div>
  <div class="ct" style="top:49px">0/6</div>
  <div class="fs" style="left:11px;top:84px;border-color:#777"><span class="lg" style="background:#1e1e1e">Color 2 Hex</span><span class="vl" style="color:#fff">00FFFF</span></div>
  <div class="ct" style="top:123px">6/6</div>
 </div>
 <div class="abs bar" style="fill:#ddd">
  <svg class="ic" style="left:9px"><use href="#i-gear"/></svg>
  <svg class="ic" style="left:49px"><use href="#i-folder"/></svg>
  <svg class="ic" style="left:288px;fill:#6a6a6a"><use href="#i-hq"/></svg>
  <svg class="ic" style="left:328px;fill:#6a6a6a"><use href="#i-img"/></svg>
  <svg class="ic" style="left:368px"><use href="#i-fit"/></svg>
  <svg class="ic" style="left:408px"><use href="#i-full"/></svg>
  <svg class="ic" style="left:448px"><use href="#i-al"/></svg>
  <svg class="ic" style="left:488px"><use href="#i-ar"/></svg>
  <svg class="ic" style="left:528px"><use href="#i-rl"/></svg>
  <svg class="ic" style="left:568px"><use href="#i-rr"/></svg>
  <svg class="ic" style="left:608px"><use href="#i-zi"/></svg>
  <svg class="ic" style="left:648px"><use href="#i-zo"/></svg>
  <div class="zb">50%</div>
 </div>
 <div class="abs" style="left:0;top:0;width:1px;height:1039px;background:#000"></div>
 <div class="abs" style="left:958px;top:0;width:2px;height:994px;background:#111"></div>
</div>

<div id="task" class="abs">
<!--TASK-->
<svg class="abs" style="left:0;top:0" width="1920" height="41" viewBox="0 1039 1920 41">
 <rect x="344" y="1039" width="48" height="41" fill="#454545"/><rect x="387.500" y="1039" width="1" height="41" fill="#2a2a2a"/>
 <rect x="344" y="1078" width="48" height="2" fill="#76b9ed"/>
 <g fill="#fff"><path d="M16 1054.200l6.500-.9v6.300H16zM23.300 1053.200l8.700-1.200v7.600h-8.700zM16 1060.400h6.500v6.300l-6.500-.9zM23.300 1060.400H32v7.600l-8.700-1.200z"/></g>
 <g fill="none" stroke="#fff" stroke-width="1.300"><path d="M64 1053h3M64 1067h3M75 1053h2.500M75 1067h2.500M66.500 1056.500h9v7h-9zM78.500 1052v5M78.500 1061v6.500"/><rect x="77.300" y="1057.300" width="2.400" height="2.400" fill="#fff" stroke="none"/></g>
 <g><path d="M112 1051h8l2 2h11.500v15.500H112z" fill="#f7c948"/><path d="M112 1055h21.500v13.500H112z" fill="#fbd767"/><path d="M116 1068.500v-6.500q0-2 2-2h9q2 0 2 2v6.500h-3.500v-5h-6v5z" fill="#3d8fdc"/></g>
 <g><circle cx="172.200" cy="1060" r="11.600" fill="#1ed760"/><g fill="none" stroke="#1f1f1f" stroke-linecap="round"><path d="M165.500 1056.300q7-2 13.800 1.400" stroke-width="2.200"/><path d="M166.200 1060.300q6-1.600 11.600 1.300" stroke-width="1.800"/><path d="M167 1064q5-1.200 9.400 1.100" stroke-width="1.500"/></g></g>
 <g><circle cx="221" cy="1061" r="10.800" fill="#ff6a2a"/><path d="M212 1054q3-3 6-2q1-3 4-4.500q0 3 2 4.500q5 1 7 6q1 5-1.500 9q-1-7-5-9q-5-2-8 1q-3 3-1 7q-5-3-3.500-12z" fill="#ffc024"/><circle cx="221.500" cy="1061.500" r="4.600" fill="#7b3fd0"/><path d="M211 1058q-2 7 3 11.500q5 3 10 1.500q-6 0-9-4q-3-4-4-9z" fill="#f0283c"/></g>
 <g><ellipse cx="269.700" cy="1059.800" rx="11.600" ry="11.600" fill="#e0141e"/><ellipse cx="269.700" cy="1059.800" rx="4.700" ry="8.200" fill="#1f1f1f"/></g>
 <g><circle cx="319" cy="1060" r="12" fill="#e8e8e8"/><path d="M308.600 1054a12 12 0 0 1 20.800 0H319a6 6 0 0 0-5.200 3z" fill="#ea4335"/><path d="M308.600 1054l5.200 9a6 6 0 0 0 5.200 3l-5.200 5.400a12 12 0 0 1-5.200-17.400z" fill="#34a853"/><path d="M329.400 1054a12 12 0 0 1-15.600 17.400l5.200-5.400a6 6 0 0 0 5.200-9z" fill="#fbbc04"/><path d="M313.800 1071.400l5.200-5.400a6 6 0 0 0 5.200-3z" fill="#fbbc04"/><circle cx="319" cy="1060" r="5.600" fill="#fff"/><circle cx="319" cy="1060" r="4.400" fill="#4285f4"/></g>
 <g transform="translate(356 1048) scale(1.500)"><rect width="16" height="16" rx="1" fill="#ffd400"/><path d="M0 1Q0 0 1 0H5V7H3V10H2V12H0Z" fill="#15151c"/><path d="M16 10H9V12H6V14H2V16H15Q16 16 16 15Z" fill="#15151c"/></g>
 <g fill="none" stroke="#fff" stroke-width="1.200"><path d="M1779 1063l6-6 6 6"/><path d="M1803.500 1054.500h13v9h-13zM1806 1067h8M1810 1063.500v3.500" /><path d="M1801 1053.500h5v4h-5zM1803 1057.500v9.500h3" stroke-width="1"/><path d="M1825.500 1058h3l4-4v13l-4-4h-3z"/><path d="M1835 1057.500q2 3 0 6" /><path d="M1837.500 1055.500q3 5 0 10" stroke="#bbb"/><path d="M1840 1053.500q4 7 0 14" stroke="#666"/></g>
 <rect x="1915" y="1040" width="1" height="40" fill="#8a8a8a"/>
</svg>
<div class="abs" style="left:1845px;top:5px;width:70px;text-align:center;color:#fff;font-size:12px;line-height:15px;letter-spacing:-0.4px">19:41</div>
<div class="abs" style="left:1845px;top:23.500px;width:71px;text-align:center;color:#fff;font-size:12px;line-height:15px;letter-spacing:-0.300px">13/01/2025</div>
<!--/TASK-->
</div>
</body></html>
